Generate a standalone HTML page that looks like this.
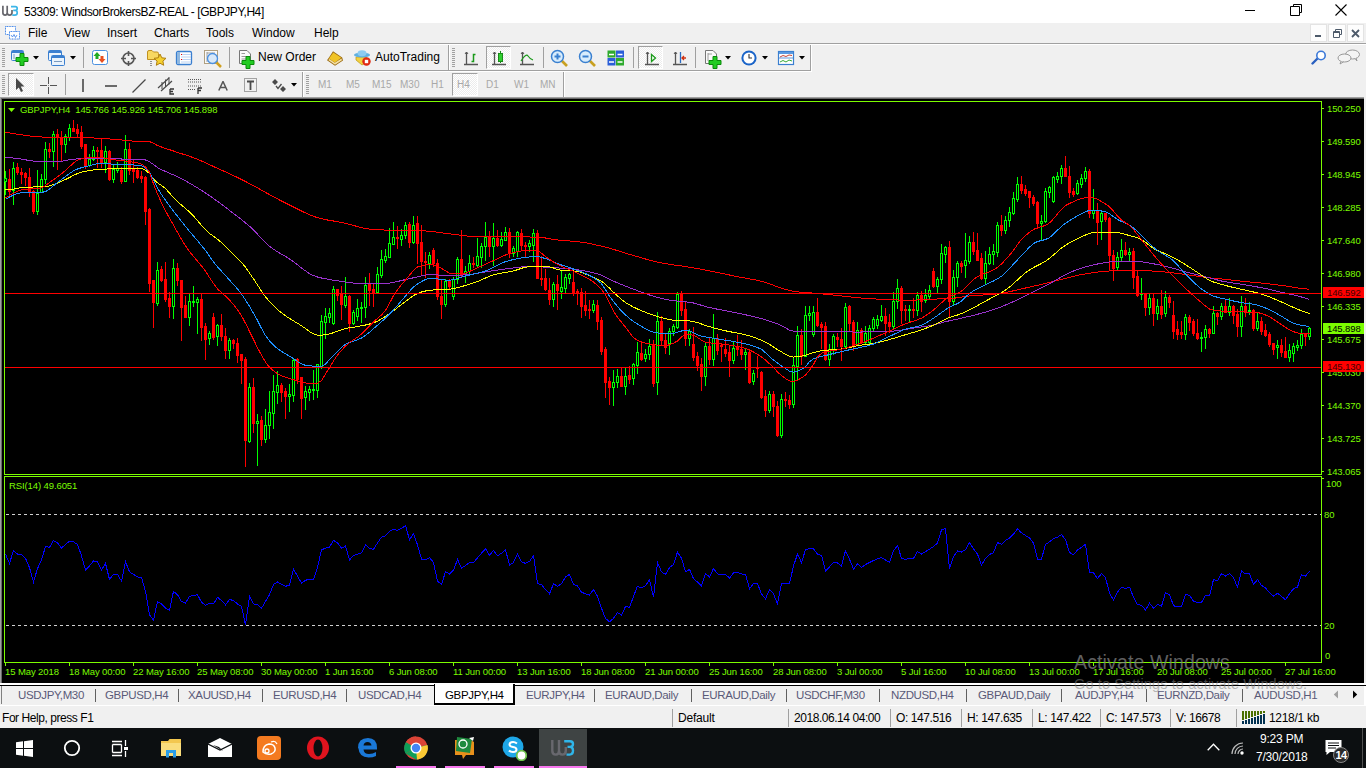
<!DOCTYPE html>
<html><head><meta charset="utf-8">
<style>
*{margin:0;padding:0;box-sizing:border-box}
html,body{width:1366px;height:768px;overflow:hidden;background:#f0f0f0;font-family:"Liberation Sans",sans-serif;}
.a{position:absolute}
.t{position:absolute;white-space:nowrap;font-size:12px;line-height:14px;color:#000}
svg{display:block}
</style></head><body>
<!-- title bar -->
<div class="a" style="left:0;top:0;width:1366px;height:23px;background:#fff"></div>
<svg class="a" style="left:0;top:0" width="20" height="20" viewBox="0 0 20 20">
<path d="M2.9 5.8 V12.8 Q2.9 15.1 5.1 15.1 Q7.2 15.1 7.2 12.8 V5.8 M7.2 12.8 Q7.2 15.1 9.6 15.1 Q12 15.1 12 12.8 V10" fill="none" stroke="#67676d" stroke-width="1.7"/>
<path d="M11 6.6 H15.3 Q17.2 6.6 17.2 8.5 Q17.2 10.4 15.1 10.4 H13.2 M15.1 10.4 Q17.2 10.4 17.2 12.7 Q17.2 15.1 14.8 15.1 H12.3" fill="none" stroke="#3db6e8" stroke-width="1.7"/>
</svg>
<div class="t" style="left:24px;top:5px;font-size:12px;letter-spacing:-0.42px">53309: WindsorBrokersBZ-REAL - [GBPJPY,H4]</div>
<div class="a" style="left:1245px;top:10px;width:10px;height:1px;background:#000"></div>
<svg class="a" style="left:1290px;top:4px" width="12" height="12" viewBox="0 0 12 12"><path d="M3.5 2.5 V0.5 H11.5 V8.5 H9.5 M0.5 2.5 H9.5 V11.5 H0.5 Z" fill="none" stroke="#000" stroke-width="1"/></svg>
<svg class="a" style="left:1335px;top:4px" width="12" height="12" viewBox="0 0 12 12"><path d="M0.5 0.5 L11.5 11.5 M11.5 0.5 L0.5 11.5" stroke="#000" stroke-width="1.1"/></svg>
<!-- menu bar -->
<div class="a" style="left:0;top:23px;width:1366px;height:20px;background:#f0f0f0"></div>
<svg class="a" style="left:4px;top:25px" width="17" height="15" viewBox="0 0 17 15">
<rect x="1.5" y="1.5" width="10" height="8" fill="#fff" stroke="#3c82e8" stroke-dasharray="1,0.6"/>
<rect x="5.5" y="6.5" width="10" height="7.5" fill="#fff" stroke="#3c82e8" stroke-dasharray="1,0.6"/>
<path d="M7 10 L8.5 12 L10 9.5 L11.5 12.5 L13 10" fill="none" stroke="#3c82e8" stroke-width="0.8"/>
</svg>
<div class="t" style="left:28px;top:26px">File</div>
<div class="t" style="left:64px;top:26px">View</div>
<div class="t" style="left:107px;top:26px">Insert</div>
<div class="t" style="left:154px;top:26px">Charts</div>
<div class="t" style="left:206px;top:26px">Tools</div>
<div class="t" style="left:252px;top:26px">Window</div>
<div class="t" style="left:314px;top:26px">Help</div>
<!-- mdi buttons -->
<div class="a" style="left:1310px;top:24px;width:17px;height:18px;background:#fdfdfd;border:1px solid #e3e3e3"></div>
<div class="a" style="left:1328px;top:24px;width:18px;height:18px;background:#fdfdfd;border:1px solid #e3e3e3"></div>
<div class="a" style="left:1347px;top:24px;width:17px;height:18px;background:#fdfdfd;border:1px solid #e3e3e3"></div>
<div class="a" style="left:1315px;top:35px;width:6px;height:2px;background:#4d5a6a"></div>
<svg class="a" style="left:1333px;top:29px" width="9" height="9" viewBox="0 0 9 9"><path d="M2.5 2.5 V0.5 H8.5 V5.5 H6.5 M0.5 2.5 H6.5 V8.5 H0.5 Z M0.5 3.5 H6.5" fill="none" stroke="#4d5a6a" stroke-width="1"/></svg>
<svg class="a" style="left:1351px;top:29px" width="9" height="9" viewBox="0 0 9 9"><path d="M1 1 L8 8 M8 1 L1 8" stroke="#4d5a6a" stroke-width="1.8"/></svg>
<div class="a" style="left:0;top:43px;width:1366px;height:1px;background:#a0a0a0"></div>
<div class="a" style="left:0;top:44px;width:1366px;height:1px;background:#fff"></div>
<!-- toolbar etched borders -->
<div class="a" style="left:0;top:70px;width:811px;height:1px;background:#a0a0a0"></div>
<div class="a" style="left:0;top:71px;width:812px;height:1px;background:#fff"></div>
<div class="a" style="left:448px;top:45px;width:1px;height:25px;background:#a0a0a0"></div>
<div class="a" style="left:449px;top:45px;width:1px;height:25px;background:#fff"></div>
<div class="a" style="left:810px;top:45px;width:1px;height:25px;background:#a0a0a0"></div>
<div class="a" style="left:811px;top:45px;width:1px;height:26px;background:#fff"></div>
<div class="a" style="left:302px;top:72px;width:1px;height:25px;background:#a0a0a0"></div>
<div class="a" style="left:303px;top:72px;width:1px;height:25px;background:#fff"></div>
<div class="a" style="left:563px;top:72px;width:1px;height:25px;background:#a0a0a0"></div>
<div class="a" style="left:564px;top:72px;width:1px;height:25px;background:#fff"></div>
<!-- grips -->
<svg class="a" style="left:2px;top:48px" width="3" height="19"><g fill="#a0a0a0"><rect y="0" width="3" height="1"/><rect y="2" width="3" height="1"/><rect y="4" width="3" height="1"/><rect y="6" width="3" height="1"/><rect y="8" width="3" height="1"/><rect y="10" width="3" height="1"/><rect y="12" width="3" height="1"/><rect y="14" width="3" height="1"/><rect y="16" width="3" height="1"/><rect y="18" width="3" height="1"/></g></svg>
<svg class="a" style="left:452px;top:48px" width="3" height="19"><g fill="#a0a0a0"><rect y="0" width="3" height="1"/><rect y="2" width="3" height="1"/><rect y="4" width="3" height="1"/><rect y="6" width="3" height="1"/><rect y="8" width="3" height="1"/><rect y="10" width="3" height="1"/><rect y="12" width="3" height="1"/><rect y="14" width="3" height="1"/><rect y="16" width="3" height="1"/><rect y="18" width="3" height="1"/></g></svg>
<svg class="a" style="left:2px;top:75px" width="3" height="19"><g fill="#a0a0a0"><rect y="0" width="3" height="1"/><rect y="2" width="3" height="1"/><rect y="4" width="3" height="1"/><rect y="6" width="3" height="1"/><rect y="8" width="3" height="1"/><rect y="10" width="3" height="1"/><rect y="12" width="3" height="1"/><rect y="14" width="3" height="1"/><rect y="16" width="3" height="1"/><rect y="18" width="3" height="1"/></g></svg>
<svg class="a" style="left:306px;top:75px" width="3" height="19"><g fill="#a0a0a0"><rect y="0" width="3" height="1"/><rect y="2" width="3" height="1"/><rect y="4" width="3" height="1"/><rect y="6" width="3" height="1"/><rect y="8" width="3" height="1"/><rect y="10" width="3" height="1"/><rect y="12" width="3" height="1"/><rect y="14" width="3" height="1"/><rect y="16" width="3" height="1"/><rect y="18" width="3" height="1"/></g></svg>
<!-- separators -->
<div class="a" style="left:83px;top:47px;width:1px;height:21px;background:#a0a0a0"></div>
<div class="a" style="left:229px;top:47px;width:1px;height:21px;background:#a0a0a0"></div>
<div class="a" style="left:543px;top:47px;width:1px;height:21px;background:#a0a0a0"></div>
<div class="a" style="left:633px;top:47px;width:1px;height:21px;background:#a0a0a0"></div>
<div class="a" style="left:695px;top:47px;width:1px;height:21px;background:#a0a0a0"></div>
<div class="a" style="left:65px;top:74px;width:1px;height:21px;background:#a0a0a0"></div>
<!-- pressed buttons -->
<div class="a" style="left:486px;top:46px;width:25px;height:23px;background:repeating-conic-gradient(#ffffff 0 25%,#ececec 0 50%) 0 0/2px 2px;border-left:1px solid #a0a0a0;border-top:1px solid #a0a0a0;border-right:1px solid #fff;border-bottom:1px solid #fff"></div>
<div class="a" style="left:638px;top:46px;width:25px;height:23px;background:repeating-conic-gradient(#ffffff 0 25%,#ececec 0 50%) 0 0/2px 2px;border-left:1px solid #a0a0a0;border-top:1px solid #a0a0a0;border-right:1px solid #fff;border-bottom:1px solid #fff"></div>
<div class="a" style="left:8px;top:73px;width:26px;height:23px;background:repeating-conic-gradient(#ffffff 0 25%,#ececec 0 50%) 0 0/2px 2px;border-left:1px solid #a0a0a0;border-top:1px solid #a0a0a0;border-right:1px solid #fff;border-bottom:1px solid #fff"></div>
<div class="a" style="left:452px;top:73px;width:26px;height:23px;background:repeating-conic-gradient(#ffffff 0 25%,#ececec 0 50%) 0 0/2px 2px;border-left:1px solid #a0a0a0;border-top:1px solid #a0a0a0;border-right:1px solid #fff;border-bottom:1px solid #fff"></div>
<!-- dropdown arrows -->
<svg class="a" style="left:33px;top:56px" width="6" height="4"><path d="M0 0H6L3 3.5Z" fill="#000"/></svg>
<svg class="a" style="left:70px;top:56px" width="6" height="4"><path d="M0 0H6L3 3.5Z" fill="#000"/></svg>
<svg class="a" style="left:725px;top:56px" width="6" height="4"><path d="M0 0H6L3 3.5Z" fill="#000"/></svg>
<svg class="a" style="left:762px;top:56px" width="6" height="4"><path d="M0 0H6L3 3.5Z" fill="#000"/></svg>
<svg class="a" style="left:799px;top:56px" width="6" height="4"><path d="M0 0H6L3 3.5Z" fill="#000"/></svg>
<svg class="a" style="left:291px;top:83px" width="6" height="4"><path d="M0 0H6L3 3.5Z" fill="#000"/></svg>
<!-- icon: new chart -->
<svg class="a" style="left:10px;top:49px" width="20" height="17" viewBox="0 0 20 17">
<rect x="1.5" y="1.5" width="12" height="10" rx="1" fill="#eaf3fc" stroke="#3a7fd0"/><rect x="2" y="2" width="11" height="2" fill="#3a7fd0"/>
<path d="M4 5 V10" stroke="#7a9ac0"/>
<path d="M10 4.5 H14 V8.5 H18 V12.5 H14 V16.5 H10 V12.5 H6 V8.5 H10 Z" fill="#22cc22" stroke="#0a8a0a"/>
</svg>
<!-- icon: profiles -->
<svg class="a" style="left:47px;top:49px" width="20" height="18" viewBox="0 0 20 18">
<rect x="1.5" y="1.5" width="13" height="10" rx="1" fill="#eaf3fc" stroke="#3a7fd0"/><rect x="2" y="2" width="12" height="2" fill="#3a7fd0"/>
<rect x="4.5" y="6.5" width="13" height="10" rx="1" fill="#eaf3fc" stroke="#3a7fd0"/><rect x="5" y="7" width="12" height="2" fill="#3a7fd0"/>
<path d="M7 12.5 H15" stroke="#7a9ac0"/>
</svg>
<!-- icon: market watch -->
<svg class="a" style="left:91px;top:49px" width="18" height="17" viewBox="0 0 18 17">
<rect x="1.5" y="1.5" width="15" height="14" rx="2" fill="#fff" stroke="#4a90e0"/>
<path d="M6 3 L9.5 7 H7.5 V10 H4.5 V7 H2.5 Z" fill="#22aa22"/>
<path d="M11 14 L14.5 10 H12.5 V7 H9.5 V10 H7.5 Z" fill="#e85020"/>
</svg>
<!-- icon: crosshair -->
<svg class="a" style="left:120px;top:50px" width="17" height="17" viewBox="0 0 17 17">
<circle cx="8.5" cy="8.5" r="5.5" fill="none" stroke="#555" stroke-width="1.6"/>
<path d="M8.5 1 V6 M8.5 11 V16 M1 8.5 H6 M11 8.5 H16" stroke="#555" stroke-width="1.6"/>
</svg>
<!-- icon: folder star -->
<svg class="a" style="left:146px;top:49px" width="21" height="18" viewBox="0 0 21 18">
<path d="M1.5 3 Q1.5 1.5 3 1.5 H6 L7.5 3 H11 Q12.5 3 12.5 4.5 V10.5 H1.5 Z" fill="#f8d860" stroke="#c09020"/>
<path d="M5 12 V17" stroke="#333" stroke-dasharray="1,1"/>
<path d="M14 5 L15.8 8.8 L20 9.3 L16.9 12.1 L17.7 16.3 L14 14.2 L10.3 16.3 L11.1 12.1 L8 9.3 L12.2 8.8 Z" fill="#f5d030" stroke="#b08010"/>
</svg>
<!-- icon: navigator -->
<svg class="a" style="left:175px;top:50px" width="18" height="16" viewBox="0 0 18 16">
<rect x="1.5" y="1.5" width="15" height="13" rx="1.5" fill="#fff" stroke="#3a7fd0" stroke-width="1.3"/>
<rect x="2" y="2" width="3" height="12" fill="#90b8e0"/>
<path d="M6 4.5H16M6 7H16M6 9.5H16M6 12H16" stroke="#a8c8f0" stroke-width="0.8"/>
<rect x="6" y="4" width="1" height="1" fill="#e00"/><rect x="6" y="9" width="1" height="1" fill="#e00"/>
</svg>
<!-- icon: tester -->
<svg class="a" style="left:203px;top:49px" width="20" height="19" viewBox="0 0 20 19">
<rect x="1.5" y="1.5" width="13" height="13" fill="#fafafa" stroke="#b0a080"/>
<path d="M4 3 V13 M4 4 H12" stroke="#888" stroke-width="0.8"/>
<path d="M13 13 L18 18" stroke="#d0a020" stroke-width="2.5"/>
<circle cx="9.5" cy="9.5" r="5" fill="#cfe4f8" fill-opacity="0.8" stroke="#4a90e0" stroke-width="1.3"/>
</svg>
<!-- icon: new order -->
<svg class="a" style="left:238px;top:49px" width="18" height="20" viewBox="0 0 18 20">
<path d="M1.5 1.5 H9 L12.5 5 V14.5 H1.5 Z" fill="#fafafa" stroke="#777"/>
<path d="M3.5 4.5 H7 M3.5 7.5 H9 M3.5 10 H9" stroke="#999"/>
<path d="M8 7.5 H12 V11.5 H16 V15.5 H12 V19.5 H8 V15.5 H4 V11.5 H8 Z" fill="#22cc22" stroke="#0a8a0a"/>
</svg>
<div class="t" style="left:258px;top:50px">New Order</div>
<!-- icon: book -->
<svg class="a" style="left:326px;top:50px" width="18" height="17" viewBox="0 0 18 17">
<path d="M7 1.2 L16.2 7.4 L17 10.6 L9 15.8 L1 10.2 L3 7.5 Z" fill="#9a6a12"/>
<path d="M7.3 2.5 L15.3 7.8 L8.8 12.6 L3 8.6 Z" fill="#f0c428"/>
<path d="M2.2 10 L3.4 9 L8.8 12.8 L15.5 8.6 L16 10.3 L9 14.7 Z" fill="#f6e0a0"/>
</svg>
<!-- icon: autotrading -->
<svg class="a" style="left:353px;top:49px" width="19" height="18" viewBox="0 0 19 18">
<path d="M3 8 L13 8 L15 12 L9 16 L3 11 Z" fill="#f2d040" stroke="#c0a020" stroke-width="0.8"/>
<ellipse cx="9" cy="6" rx="8" ry="2.6" fill="#60b0e0"/>
<ellipse cx="9" cy="4.2" rx="4.5" ry="3" fill="#8ccbf0"/>
<circle cx="13.5" cy="12.5" r="4.2" fill="#e02810"/>
<rect x="11.8" y="10.8" width="3.4" height="3.4" fill="#fff"/>
</svg>
<div class="t" style="left:375px;top:50px">AutoTrading</div>
<!-- chart toolbar icons -->
<svg class="a" style="left:463px;top:51px" width="16" height="15" viewBox="0 0 16 15">
<path d="M3.5 1 V14 M1 13.5 H15" stroke="#555" stroke-width="1.3"/><path d="M2 3 L3.5 1 L5 3" fill="none" stroke="#555"/>
<path d="M8.5 10.5 H10.5 V3.5 H12.5" fill="none" stroke="#1a9a1a" stroke-width="1.5"/>
</svg>
<svg class="a" style="left:491px;top:51px" width="16" height="15" viewBox="0 0 16 15">
<path d="M3.5 1 V14 M1 13.5 H15" stroke="#555" stroke-width="1.3"/><path d="M2 3 L3.5 1 L5 3" fill="none" stroke="#555"/>
<path d="M9.5 0 V12" stroke="#1a8a1a"/><rect x="7.5" y="2.5" width="4" height="8" fill="#30d030" stroke="#1a8a1a"/>
</svg>
<svg class="a" style="left:519px;top:51px" width="16" height="15" viewBox="0 0 16 15">
<path d="M3.5 1 V14 M1 13.5 H15" stroke="#555" stroke-width="1.3"/><path d="M2 3 L3.5 1 L5 3" fill="none" stroke="#555"/>
<path d="M2 10 Q7 2 9 5 Q11 8 14 9" fill="none" stroke="#1a9a1a" stroke-width="1.2"/>
</svg>
<svg class="a" style="left:550px;top:49px" width="20" height="18" viewBox="0 0 20 18">
<path d="M11 11 L17 17" stroke="#c8a020" stroke-width="2.6"/>
<circle cx="7.5" cy="7.5" r="6" fill="#d8ecfc" stroke="#3a80d0" stroke-width="1.5"/>
<path d="M4.5 7.5 H10.5 M7.5 4.5 V10.5" stroke="#3a80d0" stroke-width="2"/>
</svg>
<svg class="a" style="left:578px;top:49px" width="20" height="18" viewBox="0 0 20 18">
<path d="M11 11 L17 17" stroke="#c8a020" stroke-width="2.6"/>
<circle cx="7.5" cy="7.5" r="6" fill="#d8ecfc" stroke="#3a80d0" stroke-width="1.5"/>
<path d="M4.5 7.5 H10.5" stroke="#3a80d0" stroke-width="2"/>
</svg>
<svg class="a" style="left:607px;top:50px" width="18" height="16" viewBox="0 0 18 16">
<rect x="0.5" y="0.5" width="8" height="7" fill="#2eaa2e"/><rect x="9" y="0.5" width="8" height="7" fill="#2a5ed8"/>
<rect x="0.5" y="8" width="8" height="7.5" fill="#2a5ed8"/><rect x="9" y="8" width="8" height="7.5" fill="#2eaa2e"/>
<path d="M2 4.5H7M10.5 4.5H15.5M2 12H7M10.5 12H15.5" stroke="#fff" stroke-width="1.5"/>
</svg>
<svg class="a" style="left:644px;top:51px" width="16" height="15" viewBox="0 0 16 15">
<path d="M3.5 1 V14 M1 13.5 H15" stroke="#555" stroke-width="1.3"/><path d="M2 3 L3.5 1 L5 3" fill="none" stroke="#555"/>
<path d="M7.5 3.5 L11.5 7 L7.5 10.5 Z" fill="#fff" stroke="#1a9a1a" stroke-width="1.3"/>
</svg>
<svg class="a" style="left:672px;top:51px" width="16" height="15" viewBox="0 0 16 15">
<path d="M3.5 1 V14 M1 13.5 H15" stroke="#555" stroke-width="1.3"/><path d="M2 3 L3.5 1 L5 3" fill="none" stroke="#555"/>
<path d="M8.5 1 V12" stroke="#2a6ac0" stroke-width="1.3"/><path d="M14 7 H10 M12 5 L10 7 L12 9" fill="none" stroke="#d03010" stroke-width="1.3"/>
</svg>
<svg class="a" style="left:704px;top:49px" width="19" height="20" viewBox="0 0 19 20">
<path d="M1.5 1.5 H9 L12.5 5 V14.5 H1.5 Z" fill="#fafafa" stroke="#777"/>
<path d="M4 4 V12 M4 5 H8" stroke="#888" stroke-width="0.8"/>
<path d="M9 7.5 H13 V11.5 H17 V15.5 H13 V19.5 H9 V15.5 H5 V11.5 H9 Z" fill="#22cc22" stroke="#0a8a0a"/>
</svg>
<svg class="a" style="left:740px;top:49px" width="18" height="18" viewBox="0 0 18 18">
<circle cx="9" cy="9" r="7.6" fill="#1a64c8"/><circle cx="9" cy="9" r="5.6" fill="#fff"/>
<path d="M9 5 V9 H12" fill="none" stroke="#333" stroke-width="1.1"/>
</svg>
<svg class="a" style="left:777px;top:50px" width="18" height="16" viewBox="0 0 18 16">
<rect x="1.5" y="1.5" width="15" height="13" fill="#fff" stroke="#3a7fd0" stroke-width="1.2"/>
<rect x="2" y="2" width="14" height="2" fill="#5a9ae0"/>
<path d="M2 8 H16" stroke="#3a7fd0" stroke-width="0.8"/>
<path d="M3 7 L6 5.5 L9 6.5 L12 5 L15 5.5" fill="none" stroke="#c03020" stroke-width="0.9"/>
<path d="M3 12 L6 10.5 L9 12 L12 10 L15 11" fill="none" stroke="#20a020" stroke-width="0.9"/>
</svg>
<!-- row 2: line studies -->
<svg class="a" style="left:15px;top:77px" width="10" height="16" viewBox="0 0 10 16">
<path d="M1 1 V13 L3.8 10.5 L6 15 L8 14 L5.8 9.6 L9.5 9.4 Z" fill="#484848"/>
</svg>
<svg class="a" style="left:40px;top:77px" width="17" height="17" viewBox="0 0 17 17">
<path d="M8.5 0 V7 M8.5 10 V17 M0 8.5 H7 M10 8.5 H17" stroke="#555" stroke-width="1"/><rect x="8" y="8" width="1" height="1" fill="#888"/>
</svg>
<div class="a" style="left:82px;top:79px;width:2px;height:13px;background:#6a6a6a"></div>
<div class="a" style="left:105px;top:85px;width:12px;height:2px;background:#6a6a6a"></div>
<svg class="a" style="left:132px;top:79px" width="14" height="14" viewBox="0 0 14 14"><path d="M0.5 13.5 L13.5 0.5" stroke="#4a4a4a" stroke-width="1.3"/></svg>
<svg class="a" style="left:157px;top:76px" width="18" height="19" viewBox="0 0 18 19">
<path d="M1 12 L12 2 M4 15 L15 5" stroke="#4a4a4a" stroke-width="1.2"/>
<path d="M5 6 V13 M8.5 3.5 V11 M12 1 V8.5" stroke="#4a4a4a" stroke-width="1"/>
<path d="M13 13 H17 M13 13 V18 H17 M13 15.5 H16" fill="none" stroke="#333" stroke-width="1.3"/>
</svg>
<svg class="a" style="left:187px;top:78px" width="16" height="17" viewBox="0 0 16 17">
<path d="M1 1.5 H14 M1 4 H14 M1 8 H14 M1 11.5 H9" stroke="#555" stroke-dasharray="1,1"/>
<path d="M11 10 H15 M11 10 V16 M11 12.5 H14" fill="none" stroke="#333" stroke-width="1.3"/>
</svg>
<svg class="a" style="left:218px;top:81px" width="10" height="10" viewBox="0 0 10 10"><path d="M0.8 9.5 L5 0.5 L9.2 9.5 M2.5 6.5 H7.5" fill="none" stroke="#555" stroke-width="1.5"/></svg>
<svg class="a" style="left:243px;top:77px" width="15" height="16" viewBox="0 0 15 16">
<rect x="1.5" y="1.5" width="12" height="13" fill="none" stroke="#555" stroke-dasharray="1,1"/>
<path d="M4 4.5 H11 M7.5 4.5 V13" stroke="#4a4a4a" stroke-width="1.8"/>
</svg>
<svg class="a" style="left:271px;top:78px" width="16" height="15" viewBox="0 0 16 15">
<path d="M1 4 L4 1 L7 4 L4 7 Z M9 11 L12 8 L15 11 L12 14 Z" fill="#4a4a4a"/>
<path d="M5 8 L7 10.5 L10.5 6" fill="none" stroke="#4a4a4a" stroke-width="1.3"/>
</svg>
<!-- periodicity -->
<div class="t" style="left:318px;top:78px;font-size:10px;color:#a8a8a8">M1</div>
<div class="t" style="left:346px;top:78px;font-size:10px;color:#a8a8a8">M5</div>
<div class="t" style="left:372px;top:78px;font-size:10px;color:#a8a8a8">M15</div>
<div class="t" style="left:400px;top:78px;font-size:10px;color:#a8a8a8">M30</div>
<div class="t" style="left:431px;top:78px;font-size:10px;color:#a8a8a8">H1</div>
<div class="t" style="left:457px;top:78px;font-size:10px;color:#a8a8a8">H4</div>
<div class="t" style="left:486px;top:78px;font-size:10px;color:#a8a8a8">D1</div>
<div class="t" style="left:514px;top:78px;font-size:10px;color:#a8a8a8">W1</div>
<div class="t" style="left:540px;top:78px;font-size:10px;color:#a8a8a8">MN</div>
<!-- right side icons -->
<svg class="a" style="left:1311px;top:50px" width="16" height="15" viewBox="0 0 16 15">
<path d="M6 9 L1.5 13.5" stroke="#2a60c0" stroke-width="2.4" stroke-linecap="round"/>
<circle cx="10" cy="5.5" r="4.2" fill="#fff" stroke="#3a78d8" stroke-width="1.6"/>
</svg>
<svg class="a" style="left:1337px;top:49px" width="24" height="16" viewBox="0 0 24 16">
<ellipse cx="15.5" cy="5.5" rx="7" ry="4.5" fill="#f4f4f4" stroke="#999"/>
<path d="M18 9.5 L20 12 L19 9" fill="#f4f4f4" stroke="#999"/>
<ellipse cx="7.5" cy="9" rx="6.5" ry="4" fill="#f4f4f4" stroke="#999"/>
<path d="M4 12.5 L3 15 L6.5 12.8" fill="#f4f4f4" stroke="#999"/>
</svg>

<svg id="chart" width="1366" height="586" viewBox="0 97 1366 586" shape-rendering="crispEdges" style="position:absolute;left:0;top:97px">
<rect x="0" y="97" width="1366" height="586" fill="#f0f0f0"/>
<rect x="0" y="97" width="1364" height="1" fill="#a0a0a0"/>
<rect x="0" y="97" width="1" height="586" fill="#a0a0a0"/>
<rect x="1" y="98" width="1363" height="1" fill="#696969"/>
<rect x="1" y="98" width="1" height="585" fill="#696969"/>
<rect x="2" y="99" width="1362" height="584" fill="#000"/>
<rect x="4.5" y="101.5" width="1317" height="373" fill="none" stroke="#7cfc00" stroke-width="1"/>
<rect x="4.5" y="476.5" width="1317" height="186" fill="none" stroke="#7cfc00" stroke-width="1"/>
<g><rect x="5" y="171" width="1" height="7" fill="#00ff00"/>
<rect x="5" y="182" width="1" height="13" fill="#00ff00"/>
<rect x="4" y="178" width="3" height="4" fill="#00ff00"/>
<rect x="5" y="179" width="1" height="2" fill="#000"/>
<rect x="9" y="169" width="1" height="10" fill="#ff0000"/>
<rect x="9" y="192" width="1" height="3" fill="#ff0000"/>
<rect x="8" y="179" width="3" height="13" fill="#ff0000"/>
<rect x="13" y="162" width="1" height="6" fill="#00ff00"/>
<rect x="13" y="191" width="1" height="14" fill="#00ff00"/>
<rect x="12" y="168" width="3" height="23" fill="#00ff00"/>
<rect x="13" y="169" width="1" height="21" fill="#000"/>
<rect x="17" y="163" width="1" height="4" fill="#ff0000"/>
<rect x="17" y="173" width="1" height="2" fill="#ff0000"/>
<rect x="16" y="167" width="3" height="6" fill="#ff0000"/>
<rect x="21" y="168" width="1" height="4" fill="#ff0000"/>
<rect x="21" y="175" width="1" height="9" fill="#ff0000"/>
<rect x="20" y="172" width="3" height="3" fill="#ff0000"/>
<rect x="25" y="172" width="1" height="1" fill="#ff0000"/>
<rect x="25" y="178" width="1" height="8" fill="#ff0000"/>
<rect x="24" y="173" width="3" height="5" fill="#ff0000"/>
<rect x="29" y="168" width="1" height="9" fill="#ff0000"/>
<rect x="29" y="192" width="1" height="5" fill="#ff0000"/>
<rect x="28" y="177" width="3" height="15" fill="#ff0000"/>
<rect x="33" y="190" width="1" height="1" fill="#ff0000"/>
<rect x="33" y="212" width="1" height="2" fill="#ff0000"/>
<rect x="32" y="191" width="3" height="21" fill="#ff0000"/>
<rect x="37" y="170" width="1" height="23" fill="#00ff00"/>
<rect x="37" y="212" width="1" height="3" fill="#00ff00"/>
<rect x="36" y="193" width="3" height="19" fill="#00ff00"/>
<rect x="37" y="194" width="1" height="17" fill="#000"/>
<rect x="41" y="174" width="1" height="5" fill="#00ff00"/>
<rect x="40" y="179" width="3" height="14" fill="#00ff00"/>
<rect x="41" y="180" width="1" height="12" fill="#000"/>
<rect x="45" y="142" width="1" height="7" fill="#00ff00"/>
<rect x="45" y="180" width="1" height="4" fill="#00ff00"/>
<rect x="44" y="149" width="3" height="31" fill="#00ff00"/>
<rect x="45" y="150" width="1" height="29" fill="#000"/>
<rect x="49" y="143" width="1" height="6" fill="#ff0000"/>
<rect x="49" y="152" width="1" height="6" fill="#ff0000"/>
<rect x="48" y="149" width="3" height="3" fill="#ff0000"/>
<rect x="53" y="131" width="1" height="3" fill="#00ff00"/>
<rect x="53" y="152" width="1" height="15" fill="#00ff00"/>
<rect x="52" y="134" width="3" height="18" fill="#00ff00"/>
<rect x="53" y="135" width="1" height="16" fill="#000"/>
<rect x="57" y="129" width="1" height="5" fill="#ff0000"/>
<rect x="57" y="138" width="1" height="32" fill="#ff0000"/>
<rect x="56" y="134" width="3" height="4" fill="#ff0000"/>
<rect x="61" y="131" width="1" height="7" fill="#ff0000"/>
<rect x="61" y="145" width="1" height="16" fill="#ff0000"/>
<rect x="60" y="138" width="3" height="7" fill="#ff0000"/>
<rect x="65" y="134" width="1" height="2" fill="#00ff00"/>
<rect x="65" y="145" width="1" height="8" fill="#00ff00"/>
<rect x="64" y="136" width="3" height="9" fill="#00ff00"/>
<rect x="65" y="137" width="1" height="7" fill="#000"/>
<rect x="69" y="124" width="1" height="4" fill="#00ff00"/>
<rect x="69" y="138" width="1" height="3" fill="#00ff00"/>
<rect x="68" y="128" width="3" height="10" fill="#00ff00"/>
<rect x="69" y="129" width="1" height="8" fill="#000"/>
<rect x="73" y="120" width="1" height="8" fill="#ff0000"/>
<rect x="72" y="128" width="3" height="4" fill="#ff0000"/>
<rect x="77" y="124" width="1" height="5" fill="#ff0000"/>
<rect x="77" y="134" width="1" height="4" fill="#ff0000"/>
<rect x="76" y="129" width="3" height="5" fill="#ff0000"/>
<rect x="81" y="126" width="1" height="6" fill="#ff0000"/>
<rect x="81" y="147" width="1" height="2" fill="#ff0000"/>
<rect x="80" y="132" width="3" height="15" fill="#ff0000"/>
<rect x="85" y="167" width="1" height="2" fill="#ff0000"/>
<rect x="84" y="144" width="3" height="23" fill="#ff0000"/>
<rect x="89" y="154" width="1" height="5" fill="#00ff00"/>
<rect x="89" y="166" width="1" height="1" fill="#00ff00"/>
<rect x="88" y="159" width="3" height="7" fill="#00ff00"/>
<rect x="89" y="160" width="1" height="5" fill="#000"/>
<rect x="93" y="146" width="1" height="4" fill="#00ff00"/>
<rect x="93" y="160" width="1" height="1" fill="#00ff00"/>
<rect x="92" y="150" width="3" height="10" fill="#00ff00"/>
<rect x="93" y="151" width="1" height="8" fill="#000"/>
<rect x="97" y="147" width="1" height="3" fill="#ff0000"/>
<rect x="97" y="152" width="1" height="16" fill="#ff0000"/>
<rect x="96" y="150" width="3" height="2" fill="#ff0000"/>
<rect x="101" y="139" width="1" height="11" fill="#ff0000"/>
<rect x="101" y="164" width="1" height="4" fill="#ff0000"/>
<rect x="100" y="150" width="3" height="14" fill="#ff0000"/>
<rect x="105" y="146" width="1" height="5" fill="#00ff00"/>
<rect x="105" y="163" width="1" height="10" fill="#00ff00"/>
<rect x="104" y="151" width="3" height="12" fill="#00ff00"/>
<rect x="105" y="152" width="1" height="10" fill="#000"/>
<rect x="109" y="150" width="1" height="1" fill="#ff0000"/>
<rect x="109" y="180" width="1" height="1" fill="#ff0000"/>
<rect x="108" y="151" width="3" height="29" fill="#ff0000"/>
<rect x="113" y="165" width="1" height="4" fill="#00ff00"/>
<rect x="113" y="180" width="1" height="3" fill="#00ff00"/>
<rect x="112" y="169" width="3" height="11" fill="#00ff00"/>
<rect x="113" y="170" width="1" height="9" fill="#000"/>
<rect x="117" y="162" width="1" height="6" fill="#00ff00"/>
<rect x="117" y="171" width="1" height="2" fill="#00ff00"/>
<rect x="116" y="168" width="3" height="3" fill="#00ff00"/>
<rect x="117" y="169" width="1" height="1" fill="#000"/>
<rect x="121" y="167" width="1" height="3" fill="#ff0000"/>
<rect x="121" y="182" width="1" height="2" fill="#ff0000"/>
<rect x="120" y="170" width="3" height="12" fill="#ff0000"/>
<rect x="125" y="135" width="1" height="14" fill="#00ff00"/>
<rect x="124" y="149" width="3" height="33" fill="#00ff00"/>
<rect x="125" y="150" width="1" height="31" fill="#000"/>
<rect x="129" y="143" width="1" height="6" fill="#ff0000"/>
<rect x="129" y="171" width="1" height="4" fill="#ff0000"/>
<rect x="128" y="149" width="3" height="22" fill="#ff0000"/>
<rect x="133" y="159" width="1" height="9" fill="#ff0000"/>
<rect x="133" y="172" width="1" height="11" fill="#ff0000"/>
<rect x="132" y="168" width="3" height="4" fill="#ff0000"/>
<rect x="137" y="167" width="1" height="3" fill="#ff0000"/>
<rect x="137" y="178" width="1" height="1" fill="#ff0000"/>
<rect x="136" y="170" width="3" height="8" fill="#ff0000"/>
<rect x="141" y="171" width="1" height="5" fill="#ff0000"/>
<rect x="141" y="179" width="1" height="4" fill="#ff0000"/>
<rect x="140" y="176" width="3" height="3" fill="#ff0000"/>
<rect x="145" y="176" width="1" height="1" fill="#ff0000"/>
<rect x="145" y="212" width="1" height="13" fill="#ff0000"/>
<rect x="144" y="177" width="3" height="35" fill="#ff0000"/>
<rect x="149" y="208" width="1" height="1" fill="#ff0000"/>
<rect x="149" y="284" width="1" height="8" fill="#ff0000"/>
<rect x="148" y="209" width="3" height="75" fill="#ff0000"/>
<rect x="153" y="303" width="1" height="25" fill="#ff0000"/>
<rect x="152" y="280" width="3" height="23" fill="#ff0000"/>
<rect x="157" y="262" width="1" height="8" fill="#00ff00"/>
<rect x="157" y="304" width="1" height="2" fill="#00ff00"/>
<rect x="156" y="270" width="3" height="34" fill="#00ff00"/>
<rect x="157" y="271" width="1" height="32" fill="#000"/>
<rect x="161" y="266" width="1" height="3" fill="#ff0000"/>
<rect x="161" y="281" width="1" height="1" fill="#ff0000"/>
<rect x="160" y="269" width="3" height="12" fill="#ff0000"/>
<rect x="165" y="262" width="1" height="17" fill="#ff0000"/>
<rect x="165" y="300" width="1" height="2" fill="#ff0000"/>
<rect x="164" y="279" width="3" height="21" fill="#ff0000"/>
<rect x="169" y="292" width="1" height="6" fill="#ff0000"/>
<rect x="169" y="307" width="1" height="11" fill="#ff0000"/>
<rect x="168" y="298" width="3" height="9" fill="#ff0000"/>
<rect x="173" y="259" width="1" height="9" fill="#00ff00"/>
<rect x="173" y="307" width="1" height="12" fill="#00ff00"/>
<rect x="172" y="268" width="3" height="39" fill="#00ff00"/>
<rect x="173" y="269" width="1" height="37" fill="#000"/>
<rect x="177" y="263" width="1" height="5" fill="#ff0000"/>
<rect x="177" y="281" width="1" height="5" fill="#ff0000"/>
<rect x="176" y="268" width="3" height="13" fill="#ff0000"/>
<rect x="181" y="308" width="1" height="33" fill="#ff0000"/>
<rect x="180" y="280" width="3" height="28" fill="#ff0000"/>
<rect x="185" y="296" width="1" height="9" fill="#ff0000"/>
<rect x="184" y="305" width="3" height="13" fill="#ff0000"/>
<rect x="189" y="294" width="1" height="7" fill="#00ff00"/>
<rect x="189" y="318" width="1" height="8" fill="#00ff00"/>
<rect x="188" y="301" width="3" height="17" fill="#00ff00"/>
<rect x="189" y="302" width="1" height="15" fill="#000"/>
<rect x="193" y="286" width="1" height="15" fill="#00ff00"/>
<rect x="193" y="303" width="1" height="4" fill="#00ff00"/>
<rect x="192" y="301" width="3" height="2" fill="#00ff00"/>
<rect x="197" y="297" width="1" height="2" fill="#00ff00"/>
<rect x="197" y="303" width="1" height="31" fill="#00ff00"/>
<rect x="196" y="299" width="3" height="4" fill="#00ff00"/>
<rect x="197" y="300" width="1" height="2" fill="#000"/>
<rect x="201" y="294" width="1" height="5" fill="#ff0000"/>
<rect x="201" y="328" width="1" height="13" fill="#ff0000"/>
<rect x="200" y="299" width="3" height="29" fill="#ff0000"/>
<rect x="205" y="323" width="1" height="3" fill="#ff0000"/>
<rect x="205" y="340" width="1" height="20" fill="#ff0000"/>
<rect x="204" y="326" width="3" height="14" fill="#ff0000"/>
<rect x="209" y="331" width="1" height="2" fill="#00ff00"/>
<rect x="209" y="339" width="1" height="6" fill="#00ff00"/>
<rect x="208" y="333" width="3" height="6" fill="#00ff00"/>
<rect x="209" y="334" width="1" height="4" fill="#000"/>
<rect x="213" y="313" width="1" height="4" fill="#ff0000"/>
<rect x="213" y="338" width="1" height="2" fill="#ff0000"/>
<rect x="212" y="317" width="3" height="21" fill="#ff0000"/>
<rect x="217" y="324" width="1" height="1" fill="#00ff00"/>
<rect x="217" y="337" width="1" height="9" fill="#00ff00"/>
<rect x="216" y="325" width="3" height="12" fill="#00ff00"/>
<rect x="217" y="326" width="1" height="10" fill="#000"/>
<rect x="221" y="314" width="1" height="11" fill="#ff0000"/>
<rect x="221" y="337" width="1" height="4" fill="#ff0000"/>
<rect x="220" y="325" width="3" height="12" fill="#ff0000"/>
<rect x="225" y="328" width="1" height="8" fill="#ff0000"/>
<rect x="225" y="351" width="1" height="8" fill="#ff0000"/>
<rect x="224" y="336" width="3" height="15" fill="#ff0000"/>
<rect x="229" y="338" width="1" height="2" fill="#00ff00"/>
<rect x="229" y="351" width="1" height="8" fill="#00ff00"/>
<rect x="228" y="340" width="3" height="11" fill="#00ff00"/>
<rect x="229" y="341" width="1" height="9" fill="#000"/>
<rect x="233" y="339" width="1" height="1" fill="#ff0000"/>
<rect x="233" y="344" width="1" height="5" fill="#ff0000"/>
<rect x="232" y="340" width="3" height="4" fill="#ff0000"/>
<rect x="237" y="338" width="1" height="5" fill="#ff0000"/>
<rect x="237" y="356" width="1" height="7" fill="#ff0000"/>
<rect x="236" y="343" width="3" height="13" fill="#ff0000"/>
<rect x="241" y="361" width="1" height="23" fill="#ff0000"/>
<rect x="240" y="354" width="3" height="7" fill="#ff0000"/>
<rect x="245" y="357" width="1" height="2" fill="#ff0000"/>
<rect x="245" y="441" width="1" height="26" fill="#ff0000"/>
<rect x="244" y="359" width="3" height="82" fill="#ff0000"/>
<rect x="249" y="383" width="1" height="4" fill="#00ff00"/>
<rect x="249" y="442" width="1" height="1" fill="#00ff00"/>
<rect x="248" y="387" width="3" height="55" fill="#00ff00"/>
<rect x="249" y="388" width="1" height="53" fill="#000"/>
<rect x="253" y="378" width="1" height="9" fill="#ff0000"/>
<rect x="253" y="424" width="1" height="9" fill="#ff0000"/>
<rect x="252" y="387" width="3" height="37" fill="#ff0000"/>
<rect x="257" y="414" width="1" height="7" fill="#00ff00"/>
<rect x="257" y="424" width="1" height="42" fill="#00ff00"/>
<rect x="256" y="421" width="3" height="3" fill="#00ff00"/>
<rect x="257" y="422" width="1" height="1" fill="#000"/>
<rect x="261" y="416" width="1" height="4" fill="#ff0000"/>
<rect x="261" y="440" width="1" height="6" fill="#ff0000"/>
<rect x="260" y="420" width="3" height="20" fill="#ff0000"/>
<rect x="265" y="409" width="1" height="16" fill="#00ff00"/>
<rect x="265" y="440" width="1" height="3" fill="#00ff00"/>
<rect x="264" y="425" width="3" height="15" fill="#00ff00"/>
<rect x="265" y="426" width="1" height="13" fill="#000"/>
<rect x="269" y="391" width="1" height="21" fill="#00ff00"/>
<rect x="269" y="426" width="1" height="13" fill="#00ff00"/>
<rect x="268" y="412" width="3" height="14" fill="#00ff00"/>
<rect x="269" y="413" width="1" height="12" fill="#000"/>
<rect x="273" y="375" width="1" height="16" fill="#00ff00"/>
<rect x="273" y="414" width="1" height="15" fill="#00ff00"/>
<rect x="272" y="391" width="3" height="23" fill="#00ff00"/>
<rect x="273" y="392" width="1" height="21" fill="#000"/>
<rect x="277" y="371" width="1" height="14" fill="#00ff00"/>
<rect x="277" y="393" width="1" height="11" fill="#00ff00"/>
<rect x="276" y="385" width="3" height="8" fill="#00ff00"/>
<rect x="277" y="386" width="1" height="6" fill="#000"/>
<rect x="281" y="383" width="1" height="2" fill="#ff0000"/>
<rect x="281" y="393" width="1" height="9" fill="#ff0000"/>
<rect x="280" y="385" width="3" height="8" fill="#ff0000"/>
<rect x="285" y="388" width="1" height="3" fill="#ff0000"/>
<rect x="285" y="397" width="1" height="22" fill="#ff0000"/>
<rect x="284" y="391" width="3" height="6" fill="#ff0000"/>
<rect x="289" y="384" width="1" height="10" fill="#00ff00"/>
<rect x="289" y="397" width="1" height="15" fill="#00ff00"/>
<rect x="288" y="394" width="3" height="3" fill="#00ff00"/>
<rect x="289" y="395" width="1" height="1" fill="#000"/>
<rect x="293" y="359" width="1" height="1" fill="#00ff00"/>
<rect x="293" y="396" width="1" height="6" fill="#00ff00"/>
<rect x="292" y="360" width="3" height="36" fill="#00ff00"/>
<rect x="293" y="361" width="1" height="34" fill="#000"/>
<rect x="297" y="358" width="1" height="1" fill="#ff0000"/>
<rect x="297" y="380" width="1" height="4" fill="#ff0000"/>
<rect x="296" y="359" width="3" height="21" fill="#ff0000"/>
<rect x="301" y="399" width="1" height="20" fill="#ff0000"/>
<rect x="300" y="377" width="3" height="22" fill="#ff0000"/>
<rect x="305" y="386" width="1" height="5" fill="#00ff00"/>
<rect x="305" y="398" width="1" height="12" fill="#00ff00"/>
<rect x="304" y="391" width="3" height="7" fill="#00ff00"/>
<rect x="305" y="392" width="1" height="5" fill="#000"/>
<rect x="309" y="386" width="1" height="3" fill="#00ff00"/>
<rect x="309" y="393" width="1" height="8" fill="#00ff00"/>
<rect x="308" y="389" width="3" height="4" fill="#00ff00"/>
<rect x="309" y="390" width="1" height="2" fill="#000"/>
<rect x="313" y="370" width="1" height="19" fill="#00ff00"/>
<rect x="313" y="391" width="1" height="9" fill="#00ff00"/>
<rect x="312" y="389" width="3" height="2" fill="#00ff00"/>
<rect x="317" y="391" width="1" height="7" fill="#00ff00"/>
<rect x="316" y="364" width="3" height="27" fill="#00ff00"/>
<rect x="317" y="365" width="1" height="25" fill="#000"/>
<rect x="321" y="315" width="1" height="6" fill="#00ff00"/>
<rect x="321" y="367" width="1" height="2" fill="#00ff00"/>
<rect x="320" y="321" width="3" height="46" fill="#00ff00"/>
<rect x="321" y="322" width="1" height="44" fill="#000"/>
<rect x="325" y="308" width="1" height="8" fill="#00ff00"/>
<rect x="325" y="323" width="1" height="16" fill="#00ff00"/>
<rect x="324" y="316" width="3" height="7" fill="#00ff00"/>
<rect x="325" y="317" width="1" height="5" fill="#000"/>
<rect x="329" y="308" width="1" height="5" fill="#00ff00"/>
<rect x="329" y="318" width="1" height="5" fill="#00ff00"/>
<rect x="328" y="313" width="3" height="5" fill="#00ff00"/>
<rect x="329" y="314" width="1" height="3" fill="#000"/>
<rect x="333" y="286" width="1" height="3" fill="#00ff00"/>
<rect x="333" y="324" width="1" height="1" fill="#00ff00"/>
<rect x="332" y="289" width="3" height="35" fill="#00ff00"/>
<rect x="333" y="290" width="1" height="33" fill="#000"/>
<rect x="337" y="296" width="1" height="5" fill="#ff0000"/>
<rect x="336" y="289" width="3" height="7" fill="#ff0000"/>
<rect x="341" y="286" width="1" height="7" fill="#ff0000"/>
<rect x="341" y="305" width="1" height="15" fill="#ff0000"/>
<rect x="340" y="293" width="3" height="12" fill="#ff0000"/>
<rect x="345" y="277" width="1" height="19" fill="#00ff00"/>
<rect x="345" y="306" width="1" height="2" fill="#00ff00"/>
<rect x="344" y="296" width="3" height="10" fill="#00ff00"/>
<rect x="345" y="297" width="1" height="8" fill="#000"/>
<rect x="349" y="295" width="1" height="1" fill="#ff0000"/>
<rect x="349" y="324" width="1" height="8" fill="#ff0000"/>
<rect x="348" y="296" width="3" height="28" fill="#ff0000"/>
<rect x="353" y="310" width="1" height="2" fill="#00ff00"/>
<rect x="353" y="324" width="1" height="1" fill="#00ff00"/>
<rect x="352" y="312" width="3" height="12" fill="#00ff00"/>
<rect x="353" y="313" width="1" height="10" fill="#000"/>
<rect x="357" y="299" width="1" height="9" fill="#00ff00"/>
<rect x="357" y="317" width="1" height="4" fill="#00ff00"/>
<rect x="356" y="308" width="3" height="9" fill="#00ff00"/>
<rect x="357" y="309" width="1" height="7" fill="#000"/>
<rect x="361" y="302" width="1" height="5" fill="#00ff00"/>
<rect x="361" y="309" width="1" height="14" fill="#00ff00"/>
<rect x="360" y="307" width="3" height="2" fill="#00ff00"/>
<rect x="365" y="277" width="1" height="8" fill="#00ff00"/>
<rect x="365" y="308" width="1" height="10" fill="#00ff00"/>
<rect x="364" y="285" width="3" height="23" fill="#00ff00"/>
<rect x="365" y="286" width="1" height="21" fill="#000"/>
<rect x="369" y="273" width="1" height="11" fill="#ff0000"/>
<rect x="369" y="291" width="1" height="15" fill="#ff0000"/>
<rect x="368" y="284" width="3" height="7" fill="#ff0000"/>
<rect x="373" y="283" width="1" height="6" fill="#ff0000"/>
<rect x="373" y="293" width="1" height="14" fill="#ff0000"/>
<rect x="372" y="289" width="3" height="4" fill="#ff0000"/>
<rect x="377" y="267" width="1" height="7" fill="#00ff00"/>
<rect x="377" y="293" width="1" height="1" fill="#00ff00"/>
<rect x="376" y="274" width="3" height="19" fill="#00ff00"/>
<rect x="377" y="275" width="1" height="17" fill="#000"/>
<rect x="381" y="250" width="1" height="9" fill="#00ff00"/>
<rect x="381" y="276" width="1" height="2" fill="#00ff00"/>
<rect x="380" y="259" width="3" height="17" fill="#00ff00"/>
<rect x="381" y="260" width="1" height="15" fill="#000"/>
<rect x="385" y="249" width="1" height="7" fill="#00ff00"/>
<rect x="385" y="261" width="1" height="2" fill="#00ff00"/>
<rect x="384" y="256" width="3" height="5" fill="#00ff00"/>
<rect x="385" y="257" width="1" height="3" fill="#000"/>
<rect x="389" y="228" width="1" height="15" fill="#00ff00"/>
<rect x="388" y="243" width="3" height="15" fill="#00ff00"/>
<rect x="389" y="244" width="1" height="13" fill="#000"/>
<rect x="393" y="222" width="1" height="15" fill="#00ff00"/>
<rect x="392" y="237" width="3" height="8" fill="#00ff00"/>
<rect x="393" y="238" width="1" height="6" fill="#000"/>
<rect x="397" y="226" width="1" height="11" fill="#ff0000"/>
<rect x="397" y="239" width="1" height="10" fill="#ff0000"/>
<rect x="396" y="237" width="3" height="2" fill="#ff0000"/>
<rect x="401" y="229" width="1" height="6" fill="#00ff00"/>
<rect x="401" y="240" width="1" height="6" fill="#00ff00"/>
<rect x="400" y="235" width="3" height="5" fill="#00ff00"/>
<rect x="401" y="236" width="1" height="3" fill="#000"/>
<rect x="405" y="222" width="1" height="3" fill="#00ff00"/>
<rect x="405" y="236" width="1" height="3" fill="#00ff00"/>
<rect x="404" y="225" width="3" height="11" fill="#00ff00"/>
<rect x="405" y="226" width="1" height="9" fill="#000"/>
<rect x="409" y="222" width="1" height="2" fill="#ff0000"/>
<rect x="409" y="243" width="1" height="5" fill="#ff0000"/>
<rect x="408" y="224" width="3" height="19" fill="#ff0000"/>
<rect x="413" y="216" width="1" height="9" fill="#00ff00"/>
<rect x="413" y="243" width="1" height="1" fill="#00ff00"/>
<rect x="412" y="225" width="3" height="18" fill="#00ff00"/>
<rect x="413" y="226" width="1" height="16" fill="#000"/>
<rect x="417" y="216" width="1" height="7" fill="#ff0000"/>
<rect x="417" y="244" width="1" height="20" fill="#ff0000"/>
<rect x="416" y="223" width="3" height="21" fill="#ff0000"/>
<rect x="421" y="225" width="1" height="17" fill="#ff0000"/>
<rect x="421" y="262" width="1" height="13" fill="#ff0000"/>
<rect x="420" y="242" width="3" height="20" fill="#ff0000"/>
<rect x="425" y="252" width="1" height="9" fill="#ff0000"/>
<rect x="425" y="263" width="1" height="15" fill="#ff0000"/>
<rect x="424" y="261" width="3" height="2" fill="#ff0000"/>
<rect x="429" y="252" width="1" height="3" fill="#00ff00"/>
<rect x="429" y="264" width="1" height="5" fill="#00ff00"/>
<rect x="428" y="255" width="3" height="9" fill="#00ff00"/>
<rect x="429" y="256" width="1" height="7" fill="#000"/>
<rect x="433" y="248" width="1" height="2" fill="#ff0000"/>
<rect x="433" y="264" width="1" height="3" fill="#ff0000"/>
<rect x="432" y="250" width="3" height="14" fill="#ff0000"/>
<rect x="437" y="259" width="1" height="4" fill="#ff0000"/>
<rect x="437" y="297" width="1" height="3" fill="#ff0000"/>
<rect x="436" y="263" width="3" height="34" fill="#ff0000"/>
<rect x="441" y="279" width="1" height="17" fill="#ff0000"/>
<rect x="441" y="305" width="1" height="14" fill="#ff0000"/>
<rect x="440" y="296" width="3" height="9" fill="#ff0000"/>
<rect x="445" y="279" width="1" height="2" fill="#00ff00"/>
<rect x="445" y="305" width="1" height="2" fill="#00ff00"/>
<rect x="444" y="281" width="3" height="24" fill="#00ff00"/>
<rect x="445" y="282" width="1" height="22" fill="#000"/>
<rect x="449" y="279" width="1" height="1" fill="#ff0000"/>
<rect x="449" y="287" width="1" height="2" fill="#ff0000"/>
<rect x="448" y="280" width="3" height="7" fill="#ff0000"/>
<rect x="453" y="277" width="1" height="2" fill="#00ff00"/>
<rect x="453" y="297" width="1" height="3" fill="#00ff00"/>
<rect x="452" y="279" width="3" height="18" fill="#00ff00"/>
<rect x="453" y="280" width="1" height="16" fill="#000"/>
<rect x="457" y="257" width="1" height="2" fill="#00ff00"/>
<rect x="457" y="280" width="1" height="4" fill="#00ff00"/>
<rect x="456" y="259" width="3" height="21" fill="#00ff00"/>
<rect x="457" y="260" width="1" height="19" fill="#000"/>
<rect x="461" y="230" width="1" height="29" fill="#ff0000"/>
<rect x="461" y="275" width="1" height="2" fill="#ff0000"/>
<rect x="460" y="259" width="3" height="16" fill="#ff0000"/>
<rect x="465" y="266" width="1" height="5" fill="#00ff00"/>
<rect x="465" y="275" width="1" height="8" fill="#00ff00"/>
<rect x="464" y="271" width="3" height="4" fill="#00ff00"/>
<rect x="465" y="272" width="1" height="2" fill="#000"/>
<rect x="469" y="255" width="1" height="8" fill="#00ff00"/>
<rect x="469" y="272" width="1" height="3" fill="#00ff00"/>
<rect x="468" y="263" width="3" height="9" fill="#00ff00"/>
<rect x="469" y="264" width="1" height="7" fill="#000"/>
<rect x="473" y="257" width="1" height="6" fill="#ff0000"/>
<rect x="473" y="265" width="1" height="3" fill="#ff0000"/>
<rect x="472" y="263" width="3" height="2" fill="#ff0000"/>
<rect x="477" y="238" width="1" height="18" fill="#00ff00"/>
<rect x="477" y="266" width="1" height="1" fill="#00ff00"/>
<rect x="476" y="256" width="3" height="10" fill="#00ff00"/>
<rect x="477" y="257" width="1" height="8" fill="#000"/>
<rect x="481" y="243" width="1" height="3" fill="#00ff00"/>
<rect x="481" y="258" width="1" height="10" fill="#00ff00"/>
<rect x="480" y="246" width="3" height="12" fill="#00ff00"/>
<rect x="481" y="247" width="1" height="10" fill="#000"/>
<rect x="485" y="222" width="1" height="15" fill="#00ff00"/>
<rect x="485" y="247" width="1" height="14" fill="#00ff00"/>
<rect x="484" y="237" width="3" height="10" fill="#00ff00"/>
<rect x="485" y="238" width="1" height="8" fill="#000"/>
<rect x="489" y="231" width="1" height="5" fill="#ff0000"/>
<rect x="489" y="247" width="1" height="10" fill="#ff0000"/>
<rect x="488" y="236" width="3" height="11" fill="#ff0000"/>
<rect x="493" y="223" width="1" height="15" fill="#00ff00"/>
<rect x="493" y="247" width="1" height="19" fill="#00ff00"/>
<rect x="492" y="238" width="3" height="9" fill="#00ff00"/>
<rect x="493" y="239" width="1" height="7" fill="#000"/>
<rect x="497" y="230" width="1" height="8" fill="#ff0000"/>
<rect x="497" y="246" width="1" height="1" fill="#ff0000"/>
<rect x="496" y="238" width="3" height="8" fill="#ff0000"/>
<rect x="501" y="232" width="1" height="7" fill="#00ff00"/>
<rect x="501" y="246" width="1" height="1" fill="#00ff00"/>
<rect x="500" y="239" width="3" height="7" fill="#00ff00"/>
<rect x="501" y="240" width="1" height="5" fill="#000"/>
<rect x="505" y="227" width="1" height="5" fill="#00ff00"/>
<rect x="504" y="232" width="3" height="9" fill="#00ff00"/>
<rect x="505" y="233" width="1" height="7" fill="#000"/>
<rect x="509" y="228" width="1" height="4" fill="#ff0000"/>
<rect x="509" y="254" width="1" height="4" fill="#ff0000"/>
<rect x="508" y="232" width="3" height="22" fill="#ff0000"/>
<rect x="513" y="246" width="1" height="2" fill="#00ff00"/>
<rect x="513" y="254" width="1" height="3" fill="#00ff00"/>
<rect x="512" y="248" width="3" height="6" fill="#00ff00"/>
<rect x="513" y="249" width="1" height="4" fill="#000"/>
<rect x="517" y="231" width="1" height="1" fill="#00ff00"/>
<rect x="517" y="252" width="1" height="5" fill="#00ff00"/>
<rect x="516" y="232" width="3" height="20" fill="#00ff00"/>
<rect x="517" y="233" width="1" height="18" fill="#000"/>
<rect x="521" y="229" width="1" height="4" fill="#ff0000"/>
<rect x="521" y="246" width="1" height="4" fill="#ff0000"/>
<rect x="520" y="233" width="3" height="13" fill="#ff0000"/>
<rect x="525" y="242" width="1" height="3" fill="#ff0000"/>
<rect x="525" y="247" width="1" height="10" fill="#ff0000"/>
<rect x="524" y="245" width="3" height="2" fill="#ff0000"/>
<rect x="529" y="240" width="1" height="3" fill="#00ff00"/>
<rect x="529" y="247" width="1" height="5" fill="#00ff00"/>
<rect x="528" y="243" width="3" height="4" fill="#00ff00"/>
<rect x="529" y="244" width="1" height="2" fill="#000"/>
<rect x="533" y="229" width="1" height="4" fill="#00ff00"/>
<rect x="533" y="246" width="1" height="16" fill="#00ff00"/>
<rect x="532" y="233" width="3" height="13" fill="#00ff00"/>
<rect x="533" y="234" width="1" height="11" fill="#000"/>
<rect x="537" y="230" width="1" height="3" fill="#ff0000"/>
<rect x="536" y="233" width="3" height="46" fill="#ff0000"/>
<rect x="541" y="256" width="1" height="22" fill="#ff0000"/>
<rect x="541" y="280" width="1" height="6" fill="#ff0000"/>
<rect x="540" y="278" width="3" height="2" fill="#ff0000"/>
<rect x="545" y="269" width="1" height="9" fill="#ff0000"/>
<rect x="545" y="290" width="1" height="1" fill="#ff0000"/>
<rect x="544" y="278" width="3" height="12" fill="#ff0000"/>
<rect x="549" y="278" width="1" height="12" fill="#ff0000"/>
<rect x="549" y="300" width="1" height="5" fill="#ff0000"/>
<rect x="548" y="290" width="3" height="10" fill="#ff0000"/>
<rect x="553" y="282" width="1" height="2" fill="#00ff00"/>
<rect x="553" y="300" width="1" height="7" fill="#00ff00"/>
<rect x="552" y="284" width="3" height="16" fill="#00ff00"/>
<rect x="553" y="285" width="1" height="14" fill="#000"/>
<rect x="557" y="275" width="1" height="9" fill="#ff0000"/>
<rect x="557" y="291" width="1" height="19" fill="#ff0000"/>
<rect x="556" y="284" width="3" height="7" fill="#ff0000"/>
<rect x="561" y="271" width="1" height="16" fill="#00ff00"/>
<rect x="561" y="292" width="1" height="7" fill="#00ff00"/>
<rect x="560" y="287" width="3" height="5" fill="#00ff00"/>
<rect x="561" y="288" width="1" height="3" fill="#000"/>
<rect x="565" y="274" width="1" height="3" fill="#00ff00"/>
<rect x="565" y="289" width="1" height="5" fill="#00ff00"/>
<rect x="564" y="277" width="3" height="12" fill="#00ff00"/>
<rect x="565" y="278" width="1" height="10" fill="#000"/>
<rect x="569" y="273" width="1" height="1" fill="#00ff00"/>
<rect x="569" y="279" width="1" height="5" fill="#00ff00"/>
<rect x="568" y="274" width="3" height="5" fill="#00ff00"/>
<rect x="569" y="275" width="1" height="3" fill="#000"/>
<rect x="573" y="271" width="1" height="11" fill="#ff0000"/>
<rect x="573" y="293" width="1" height="3" fill="#ff0000"/>
<rect x="572" y="282" width="3" height="11" fill="#ff0000"/>
<rect x="577" y="289" width="1" height="2" fill="#ff0000"/>
<rect x="577" y="294" width="1" height="11" fill="#ff0000"/>
<rect x="576" y="291" width="3" height="3" fill="#ff0000"/>
<rect x="581" y="288" width="1" height="4" fill="#ff0000"/>
<rect x="581" y="307" width="1" height="11" fill="#ff0000"/>
<rect x="580" y="292" width="3" height="15" fill="#ff0000"/>
<rect x="585" y="291" width="1" height="14" fill="#ff0000"/>
<rect x="585" y="311" width="1" height="5" fill="#ff0000"/>
<rect x="584" y="305" width="3" height="6" fill="#ff0000"/>
<rect x="589" y="300" width="1" height="9" fill="#ff0000"/>
<rect x="589" y="311" width="1" height="8" fill="#ff0000"/>
<rect x="588" y="309" width="3" height="2" fill="#ff0000"/>
<rect x="593" y="300" width="1" height="4" fill="#00ff00"/>
<rect x="593" y="311" width="1" height="2" fill="#00ff00"/>
<rect x="592" y="304" width="3" height="7" fill="#00ff00"/>
<rect x="593" y="305" width="1" height="5" fill="#000"/>
<rect x="597" y="300" width="1" height="5" fill="#ff0000"/>
<rect x="597" y="322" width="1" height="8" fill="#ff0000"/>
<rect x="596" y="305" width="3" height="17" fill="#ff0000"/>
<rect x="601" y="317" width="1" height="3" fill="#ff0000"/>
<rect x="601" y="352" width="1" height="3" fill="#ff0000"/>
<rect x="600" y="320" width="3" height="32" fill="#ff0000"/>
<rect x="605" y="347" width="1" height="2" fill="#ff0000"/>
<rect x="605" y="383" width="1" height="15" fill="#ff0000"/>
<rect x="604" y="349" width="3" height="34" fill="#ff0000"/>
<rect x="609" y="377" width="1" height="4" fill="#ff0000"/>
<rect x="609" y="388" width="1" height="17" fill="#ff0000"/>
<rect x="608" y="381" width="3" height="7" fill="#ff0000"/>
<rect x="613" y="370" width="1" height="12" fill="#00ff00"/>
<rect x="613" y="388" width="1" height="18" fill="#00ff00"/>
<rect x="612" y="382" width="3" height="6" fill="#00ff00"/>
<rect x="613" y="383" width="1" height="4" fill="#000"/>
<rect x="617" y="369" width="1" height="7" fill="#00ff00"/>
<rect x="617" y="383" width="1" height="5" fill="#00ff00"/>
<rect x="616" y="376" width="3" height="7" fill="#00ff00"/>
<rect x="617" y="377" width="1" height="5" fill="#000"/>
<rect x="621" y="368" width="1" height="8" fill="#ff0000"/>
<rect x="620" y="376" width="3" height="11" fill="#ff0000"/>
<rect x="625" y="368" width="1" height="8" fill="#00ff00"/>
<rect x="625" y="387" width="1" height="8" fill="#00ff00"/>
<rect x="624" y="376" width="3" height="11" fill="#00ff00"/>
<rect x="625" y="377" width="1" height="9" fill="#000"/>
<rect x="629" y="366" width="1" height="9" fill="#ff0000"/>
<rect x="629" y="380" width="1" height="4" fill="#ff0000"/>
<rect x="628" y="375" width="3" height="5" fill="#ff0000"/>
<rect x="633" y="363" width="1" height="1" fill="#00ff00"/>
<rect x="633" y="379" width="1" height="6" fill="#00ff00"/>
<rect x="632" y="364" width="3" height="15" fill="#00ff00"/>
<rect x="633" y="365" width="1" height="13" fill="#000"/>
<rect x="637" y="342" width="1" height="10" fill="#00ff00"/>
<rect x="637" y="366" width="1" height="8" fill="#00ff00"/>
<rect x="636" y="352" width="3" height="14" fill="#00ff00"/>
<rect x="637" y="353" width="1" height="12" fill="#000"/>
<rect x="641" y="342" width="1" height="11" fill="#ff0000"/>
<rect x="641" y="360" width="1" height="1" fill="#ff0000"/>
<rect x="640" y="353" width="3" height="7" fill="#ff0000"/>
<rect x="645" y="349" width="1" height="5" fill="#00ff00"/>
<rect x="645" y="359" width="1" height="3" fill="#00ff00"/>
<rect x="644" y="354" width="3" height="5" fill="#00ff00"/>
<rect x="645" y="355" width="1" height="3" fill="#000"/>
<rect x="649" y="339" width="1" height="7" fill="#00ff00"/>
<rect x="649" y="355" width="1" height="5" fill="#00ff00"/>
<rect x="648" y="346" width="3" height="9" fill="#00ff00"/>
<rect x="649" y="347" width="1" height="7" fill="#000"/>
<rect x="653" y="340" width="1" height="5" fill="#ff0000"/>
<rect x="653" y="384" width="1" height="3" fill="#ff0000"/>
<rect x="652" y="345" width="3" height="39" fill="#ff0000"/>
<rect x="657" y="312" width="1" height="9" fill="#00ff00"/>
<rect x="657" y="383" width="1" height="12" fill="#00ff00"/>
<rect x="656" y="321" width="3" height="62" fill="#00ff00"/>
<rect x="657" y="322" width="1" height="60" fill="#000"/>
<rect x="661" y="316" width="1" height="5" fill="#ff0000"/>
<rect x="661" y="341" width="1" height="4" fill="#ff0000"/>
<rect x="660" y="321" width="3" height="20" fill="#ff0000"/>
<rect x="665" y="333" width="1" height="7" fill="#ff0000"/>
<rect x="665" y="348" width="1" height="6" fill="#ff0000"/>
<rect x="664" y="340" width="3" height="8" fill="#ff0000"/>
<rect x="669" y="328" width="1" height="3" fill="#00ff00"/>
<rect x="669" y="344" width="1" height="11" fill="#00ff00"/>
<rect x="668" y="331" width="3" height="13" fill="#00ff00"/>
<rect x="669" y="332" width="1" height="11" fill="#000"/>
<rect x="673" y="324" width="1" height="2" fill="#00ff00"/>
<rect x="673" y="332" width="1" height="4" fill="#00ff00"/>
<rect x="672" y="326" width="3" height="6" fill="#00ff00"/>
<rect x="673" y="327" width="1" height="4" fill="#000"/>
<rect x="677" y="292" width="1" height="2" fill="#00ff00"/>
<rect x="677" y="328" width="1" height="1" fill="#00ff00"/>
<rect x="676" y="294" width="3" height="34" fill="#00ff00"/>
<rect x="677" y="295" width="1" height="32" fill="#000"/>
<rect x="681" y="291" width="1" height="3" fill="#ff0000"/>
<rect x="681" y="311" width="1" height="5" fill="#ff0000"/>
<rect x="680" y="294" width="3" height="17" fill="#ff0000"/>
<rect x="685" y="302" width="1" height="7" fill="#ff0000"/>
<rect x="685" y="339" width="1" height="7" fill="#ff0000"/>
<rect x="684" y="309" width="3" height="30" fill="#ff0000"/>
<rect x="689" y="329" width="1" height="2" fill="#00ff00"/>
<rect x="689" y="339" width="1" height="7" fill="#00ff00"/>
<rect x="688" y="331" width="3" height="8" fill="#00ff00"/>
<rect x="689" y="332" width="1" height="6" fill="#000"/>
<rect x="693" y="327" width="1" height="17" fill="#ff0000"/>
<rect x="693" y="358" width="1" height="3" fill="#ff0000"/>
<rect x="692" y="344" width="3" height="14" fill="#ff0000"/>
<rect x="697" y="352" width="1" height="4" fill="#ff0000"/>
<rect x="697" y="366" width="1" height="5" fill="#ff0000"/>
<rect x="696" y="356" width="3" height="10" fill="#ff0000"/>
<rect x="701" y="358" width="1" height="6" fill="#ff0000"/>
<rect x="701" y="377" width="1" height="14" fill="#ff0000"/>
<rect x="700" y="364" width="3" height="13" fill="#ff0000"/>
<rect x="705" y="342" width="1" height="4" fill="#00ff00"/>
<rect x="705" y="377" width="1" height="9" fill="#00ff00"/>
<rect x="704" y="346" width="3" height="31" fill="#00ff00"/>
<rect x="705" y="347" width="1" height="29" fill="#000"/>
<rect x="709" y="338" width="1" height="8" fill="#ff0000"/>
<rect x="709" y="360" width="1" height="5" fill="#ff0000"/>
<rect x="708" y="346" width="3" height="14" fill="#ff0000"/>
<rect x="713" y="314" width="1" height="24" fill="#00ff00"/>
<rect x="713" y="360" width="1" height="6" fill="#00ff00"/>
<rect x="712" y="338" width="3" height="22" fill="#00ff00"/>
<rect x="713" y="339" width="1" height="20" fill="#000"/>
<rect x="717" y="334" width="1" height="4" fill="#ff0000"/>
<rect x="717" y="351" width="1" height="4" fill="#ff0000"/>
<rect x="716" y="338" width="3" height="13" fill="#ff0000"/>
<rect x="721" y="344" width="1" height="1" fill="#ff0000"/>
<rect x="721" y="347" width="1" height="15" fill="#ff0000"/>
<rect x="720" y="345" width="3" height="2" fill="#ff0000"/>
<rect x="725" y="338" width="1" height="11" fill="#ff0000"/>
<rect x="725" y="354" width="1" height="3" fill="#ff0000"/>
<rect x="724" y="349" width="3" height="5" fill="#ff0000"/>
<rect x="729" y="346" width="1" height="6" fill="#ff0000"/>
<rect x="729" y="361" width="1" height="16" fill="#ff0000"/>
<rect x="728" y="352" width="3" height="9" fill="#ff0000"/>
<rect x="733" y="341" width="1" height="7" fill="#00ff00"/>
<rect x="733" y="361" width="1" height="3" fill="#00ff00"/>
<rect x="732" y="348" width="3" height="13" fill="#00ff00"/>
<rect x="733" y="349" width="1" height="11" fill="#000"/>
<rect x="737" y="335" width="1" height="12" fill="#ff0000"/>
<rect x="737" y="350" width="1" height="6" fill="#ff0000"/>
<rect x="736" y="347" width="3" height="3" fill="#ff0000"/>
<rect x="741" y="340" width="1" height="9" fill="#ff0000"/>
<rect x="741" y="355" width="1" height="5" fill="#ff0000"/>
<rect x="740" y="349" width="3" height="6" fill="#ff0000"/>
<rect x="745" y="349" width="1" height="3" fill="#00ff00"/>
<rect x="745" y="355" width="1" height="15" fill="#00ff00"/>
<rect x="744" y="352" width="3" height="3" fill="#00ff00"/>
<rect x="745" y="353" width="1" height="1" fill="#000"/>
<rect x="749" y="350" width="1" height="2" fill="#ff0000"/>
<rect x="749" y="383" width="1" height="1" fill="#ff0000"/>
<rect x="748" y="352" width="3" height="31" fill="#ff0000"/>
<rect x="753" y="370" width="1" height="3" fill="#00ff00"/>
<rect x="753" y="382" width="1" height="3" fill="#00ff00"/>
<rect x="752" y="373" width="3" height="9" fill="#00ff00"/>
<rect x="753" y="374" width="1" height="7" fill="#000"/>
<rect x="757" y="356" width="1" height="11" fill="#ff0000"/>
<rect x="757" y="369" width="1" height="9" fill="#ff0000"/>
<rect x="756" y="367" width="3" height="2" fill="#ff0000"/>
<rect x="761" y="371" width="1" height="1" fill="#ff0000"/>
<rect x="761" y="398" width="1" height="1" fill="#ff0000"/>
<rect x="760" y="372" width="3" height="26" fill="#ff0000"/>
<rect x="765" y="390" width="1" height="6" fill="#ff0000"/>
<rect x="765" y="411" width="1" height="6" fill="#ff0000"/>
<rect x="764" y="396" width="3" height="15" fill="#ff0000"/>
<rect x="769" y="391" width="1" height="3" fill="#00ff00"/>
<rect x="769" y="411" width="1" height="2" fill="#00ff00"/>
<rect x="768" y="394" width="3" height="17" fill="#00ff00"/>
<rect x="769" y="395" width="1" height="15" fill="#000"/>
<rect x="773" y="391" width="1" height="3" fill="#ff0000"/>
<rect x="773" y="407" width="1" height="10" fill="#ff0000"/>
<rect x="772" y="394" width="3" height="13" fill="#ff0000"/>
<rect x="777" y="401" width="1" height="5" fill="#ff0000"/>
<rect x="777" y="436" width="1" height="1" fill="#ff0000"/>
<rect x="776" y="406" width="3" height="30" fill="#ff0000"/>
<rect x="781" y="394" width="1" height="5" fill="#00ff00"/>
<rect x="781" y="436" width="1" height="2" fill="#00ff00"/>
<rect x="780" y="399" width="3" height="37" fill="#00ff00"/>
<rect x="781" y="400" width="1" height="35" fill="#000"/>
<rect x="785" y="392" width="1" height="7" fill="#ff0000"/>
<rect x="785" y="401" width="1" height="6" fill="#ff0000"/>
<rect x="784" y="399" width="3" height="2" fill="#ff0000"/>
<rect x="789" y="395" width="1" height="5" fill="#ff0000"/>
<rect x="789" y="405" width="1" height="4" fill="#ff0000"/>
<rect x="788" y="400" width="3" height="5" fill="#ff0000"/>
<rect x="793" y="357" width="1" height="8" fill="#00ff00"/>
<rect x="793" y="405" width="1" height="3" fill="#00ff00"/>
<rect x="792" y="365" width="3" height="40" fill="#00ff00"/>
<rect x="793" y="366" width="1" height="38" fill="#000"/>
<rect x="797" y="326" width="1" height="9" fill="#00ff00"/>
<rect x="797" y="367" width="1" height="13" fill="#00ff00"/>
<rect x="796" y="335" width="3" height="32" fill="#00ff00"/>
<rect x="797" y="336" width="1" height="30" fill="#000"/>
<rect x="801" y="329" width="1" height="6" fill="#ff0000"/>
<rect x="801" y="357" width="1" height="8" fill="#ff0000"/>
<rect x="800" y="335" width="3" height="22" fill="#ff0000"/>
<rect x="805" y="306" width="1" height="9" fill="#00ff00"/>
<rect x="804" y="315" width="3" height="42" fill="#00ff00"/>
<rect x="805" y="316" width="1" height="40" fill="#000"/>
<rect x="809" y="306" width="1" height="7" fill="#00ff00"/>
<rect x="809" y="316" width="1" height="5" fill="#00ff00"/>
<rect x="808" y="313" width="3" height="3" fill="#00ff00"/>
<rect x="809" y="314" width="1" height="1" fill="#000"/>
<rect x="813" y="306" width="1" height="6" fill="#00ff00"/>
<rect x="813" y="335" width="1" height="2" fill="#00ff00"/>
<rect x="812" y="312" width="3" height="23" fill="#00ff00"/>
<rect x="813" y="313" width="1" height="21" fill="#000"/>
<rect x="817" y="298" width="1" height="14" fill="#ff0000"/>
<rect x="817" y="326" width="1" height="1" fill="#ff0000"/>
<rect x="816" y="312" width="3" height="14" fill="#ff0000"/>
<rect x="821" y="322" width="1" height="2" fill="#ff0000"/>
<rect x="821" y="328" width="1" height="21" fill="#ff0000"/>
<rect x="820" y="324" width="3" height="4" fill="#ff0000"/>
<rect x="825" y="322" width="1" height="4" fill="#ff0000"/>
<rect x="825" y="360" width="1" height="1" fill="#ff0000"/>
<rect x="824" y="326" width="3" height="34" fill="#ff0000"/>
<rect x="829" y="344" width="1" height="5" fill="#00ff00"/>
<rect x="829" y="360" width="1" height="6" fill="#00ff00"/>
<rect x="828" y="349" width="3" height="11" fill="#00ff00"/>
<rect x="829" y="350" width="1" height="9" fill="#000"/>
<rect x="833" y="334" width="1" height="2" fill="#00ff00"/>
<rect x="833" y="350" width="1" height="5" fill="#00ff00"/>
<rect x="832" y="336" width="3" height="14" fill="#00ff00"/>
<rect x="833" y="337" width="1" height="12" fill="#000"/>
<rect x="837" y="333" width="1" height="4" fill="#ff0000"/>
<rect x="837" y="340" width="1" height="7" fill="#ff0000"/>
<rect x="836" y="337" width="3" height="3" fill="#ff0000"/>
<rect x="841" y="328" width="1" height="11" fill="#ff0000"/>
<rect x="841" y="347" width="1" height="14" fill="#ff0000"/>
<rect x="840" y="339" width="3" height="8" fill="#ff0000"/>
<rect x="845" y="303" width="1" height="4" fill="#00ff00"/>
<rect x="845" y="347" width="1" height="1" fill="#00ff00"/>
<rect x="844" y="307" width="3" height="40" fill="#00ff00"/>
<rect x="845" y="308" width="1" height="38" fill="#000"/>
<rect x="849" y="305" width="1" height="1" fill="#ff0000"/>
<rect x="849" y="324" width="1" height="7" fill="#ff0000"/>
<rect x="848" y="306" width="3" height="18" fill="#ff0000"/>
<rect x="853" y="320" width="1" height="2" fill="#ff0000"/>
<rect x="853" y="345" width="1" height="6" fill="#ff0000"/>
<rect x="852" y="322" width="3" height="23" fill="#ff0000"/>
<rect x="857" y="322" width="1" height="8" fill="#00ff00"/>
<rect x="857" y="345" width="1" height="1" fill="#00ff00"/>
<rect x="856" y="330" width="3" height="15" fill="#00ff00"/>
<rect x="857" y="331" width="1" height="13" fill="#000"/>
<rect x="861" y="328" width="1" height="2" fill="#ff0000"/>
<rect x="861" y="343" width="1" height="1" fill="#ff0000"/>
<rect x="860" y="330" width="3" height="13" fill="#ff0000"/>
<rect x="865" y="326" width="1" height="7" fill="#00ff00"/>
<rect x="865" y="343" width="1" height="2" fill="#00ff00"/>
<rect x="864" y="333" width="3" height="10" fill="#00ff00"/>
<rect x="865" y="334" width="1" height="8" fill="#000"/>
<rect x="869" y="325" width="1" height="3" fill="#00ff00"/>
<rect x="869" y="343" width="1" height="2" fill="#00ff00"/>
<rect x="868" y="328" width="3" height="15" fill="#00ff00"/>
<rect x="869" y="329" width="1" height="13" fill="#000"/>
<rect x="873" y="317" width="1" height="2" fill="#00ff00"/>
<rect x="873" y="329" width="1" height="2" fill="#00ff00"/>
<rect x="872" y="319" width="3" height="10" fill="#00ff00"/>
<rect x="873" y="320" width="1" height="8" fill="#000"/>
<rect x="877" y="315" width="1" height="4" fill="#00ff00"/>
<rect x="877" y="326" width="1" height="3" fill="#00ff00"/>
<rect x="876" y="319" width="3" height="7" fill="#00ff00"/>
<rect x="877" y="320" width="1" height="5" fill="#000"/>
<rect x="881" y="305" width="1" height="11" fill="#00ff00"/>
<rect x="881" y="321" width="1" height="1" fill="#00ff00"/>
<rect x="880" y="316" width="3" height="5" fill="#00ff00"/>
<rect x="881" y="317" width="1" height="3" fill="#000"/>
<rect x="885" y="308" width="1" height="8" fill="#ff0000"/>
<rect x="885" y="324" width="1" height="12" fill="#ff0000"/>
<rect x="884" y="316" width="3" height="8" fill="#ff0000"/>
<rect x="889" y="314" width="1" height="8" fill="#ff0000"/>
<rect x="889" y="327" width="1" height="6" fill="#ff0000"/>
<rect x="888" y="322" width="3" height="5" fill="#ff0000"/>
<rect x="893" y="292" width="1" height="9" fill="#00ff00"/>
<rect x="893" y="327" width="1" height="2" fill="#00ff00"/>
<rect x="892" y="301" width="3" height="26" fill="#00ff00"/>
<rect x="893" y="302" width="1" height="24" fill="#000"/>
<rect x="897" y="279" width="1" height="9" fill="#00ff00"/>
<rect x="897" y="302" width="1" height="7" fill="#00ff00"/>
<rect x="896" y="288" width="3" height="14" fill="#00ff00"/>
<rect x="897" y="289" width="1" height="12" fill="#000"/>
<rect x="901" y="286" width="1" height="2" fill="#ff0000"/>
<rect x="901" y="311" width="1" height="13" fill="#ff0000"/>
<rect x="900" y="288" width="3" height="23" fill="#ff0000"/>
<rect x="905" y="305" width="1" height="4" fill="#ff0000"/>
<rect x="905" y="311" width="1" height="10" fill="#ff0000"/>
<rect x="904" y="309" width="3" height="2" fill="#ff0000"/>
<rect x="909" y="305" width="1" height="4" fill="#00ff00"/>
<rect x="909" y="311" width="1" height="12" fill="#00ff00"/>
<rect x="908" y="309" width="3" height="2" fill="#00ff00"/>
<rect x="913" y="298" width="1" height="11" fill="#ff0000"/>
<rect x="913" y="311" width="1" height="7" fill="#ff0000"/>
<rect x="912" y="309" width="3" height="2" fill="#ff0000"/>
<rect x="917" y="292" width="1" height="3" fill="#00ff00"/>
<rect x="917" y="311" width="1" height="5" fill="#00ff00"/>
<rect x="916" y="295" width="3" height="16" fill="#00ff00"/>
<rect x="917" y="296" width="1" height="14" fill="#000"/>
<rect x="921" y="291" width="1" height="4" fill="#ff0000"/>
<rect x="921" y="302" width="1" height="10" fill="#ff0000"/>
<rect x="920" y="295" width="3" height="7" fill="#ff0000"/>
<rect x="925" y="289" width="1" height="6" fill="#00ff00"/>
<rect x="925" y="301" width="1" height="2" fill="#00ff00"/>
<rect x="924" y="295" width="3" height="6" fill="#00ff00"/>
<rect x="925" y="296" width="1" height="4" fill="#000"/>
<rect x="929" y="285" width="1" height="5" fill="#00ff00"/>
<rect x="929" y="297" width="1" height="2" fill="#00ff00"/>
<rect x="928" y="290" width="3" height="7" fill="#00ff00"/>
<rect x="929" y="291" width="1" height="5" fill="#000"/>
<rect x="933" y="268" width="1" height="3" fill="#ff0000"/>
<rect x="933" y="287" width="1" height="1" fill="#ff0000"/>
<rect x="932" y="271" width="3" height="16" fill="#ff0000"/>
<rect x="937" y="277" width="1" height="2" fill="#00ff00"/>
<rect x="937" y="287" width="1" height="7" fill="#00ff00"/>
<rect x="936" y="279" width="3" height="8" fill="#00ff00"/>
<rect x="937" y="280" width="1" height="6" fill="#000"/>
<rect x="941" y="244" width="1" height="9" fill="#00ff00"/>
<rect x="941" y="280" width="1" height="4" fill="#00ff00"/>
<rect x="940" y="253" width="3" height="27" fill="#00ff00"/>
<rect x="941" y="254" width="1" height="25" fill="#000"/>
<rect x="945" y="246" width="1" height="1" fill="#00ff00"/>
<rect x="945" y="255" width="1" height="8" fill="#00ff00"/>
<rect x="944" y="247" width="3" height="8" fill="#00ff00"/>
<rect x="945" y="248" width="1" height="6" fill="#000"/>
<rect x="949" y="241" width="1" height="6" fill="#ff0000"/>
<rect x="949" y="302" width="1" height="16" fill="#ff0000"/>
<rect x="948" y="247" width="3" height="55" fill="#ff0000"/>
<rect x="953" y="270" width="1" height="7" fill="#00ff00"/>
<rect x="953" y="302" width="1" height="4" fill="#00ff00"/>
<rect x="952" y="277" width="3" height="25" fill="#00ff00"/>
<rect x="953" y="278" width="1" height="23" fill="#000"/>
<rect x="957" y="261" width="1" height="2" fill="#00ff00"/>
<rect x="957" y="278" width="1" height="9" fill="#00ff00"/>
<rect x="956" y="263" width="3" height="15" fill="#00ff00"/>
<rect x="957" y="264" width="1" height="13" fill="#000"/>
<rect x="961" y="261" width="1" height="2" fill="#ff0000"/>
<rect x="961" y="267" width="1" height="6" fill="#ff0000"/>
<rect x="960" y="263" width="3" height="4" fill="#ff0000"/>
<rect x="965" y="233" width="1" height="27" fill="#00ff00"/>
<rect x="965" y="266" width="1" height="12" fill="#00ff00"/>
<rect x="964" y="260" width="3" height="6" fill="#00ff00"/>
<rect x="965" y="261" width="1" height="4" fill="#000"/>
<rect x="969" y="236" width="1" height="6" fill="#00ff00"/>
<rect x="969" y="262" width="1" height="2" fill="#00ff00"/>
<rect x="968" y="242" width="3" height="20" fill="#00ff00"/>
<rect x="969" y="243" width="1" height="18" fill="#000"/>
<rect x="973" y="232" width="1" height="10" fill="#ff0000"/>
<rect x="973" y="252" width="1" height="3" fill="#ff0000"/>
<rect x="972" y="242" width="3" height="10" fill="#ff0000"/>
<rect x="977" y="233" width="1" height="17" fill="#ff0000"/>
<rect x="976" y="250" width="3" height="11" fill="#ff0000"/>
<rect x="981" y="253" width="1" height="5" fill="#ff0000"/>
<rect x="981" y="279" width="1" height="1" fill="#ff0000"/>
<rect x="980" y="258" width="3" height="21" fill="#ff0000"/>
<rect x="985" y="251" width="1" height="12" fill="#00ff00"/>
<rect x="985" y="279" width="1" height="5" fill="#00ff00"/>
<rect x="984" y="263" width="3" height="16" fill="#00ff00"/>
<rect x="985" y="264" width="1" height="14" fill="#000"/>
<rect x="989" y="247" width="1" height="7" fill="#00ff00"/>
<rect x="989" y="264" width="1" height="1" fill="#00ff00"/>
<rect x="988" y="254" width="3" height="10" fill="#00ff00"/>
<rect x="989" y="255" width="1" height="8" fill="#000"/>
<rect x="993" y="244" width="1" height="7" fill="#00ff00"/>
<rect x="993" y="255" width="1" height="10" fill="#00ff00"/>
<rect x="992" y="251" width="3" height="4" fill="#00ff00"/>
<rect x="993" y="252" width="1" height="2" fill="#000"/>
<rect x="997" y="222" width="1" height="3" fill="#00ff00"/>
<rect x="997" y="253" width="1" height="4" fill="#00ff00"/>
<rect x="996" y="225" width="3" height="28" fill="#00ff00"/>
<rect x="997" y="226" width="1" height="26" fill="#000"/>
<rect x="1001" y="215" width="1" height="10" fill="#ff0000"/>
<rect x="1001" y="231" width="1" height="5" fill="#ff0000"/>
<rect x="1000" y="225" width="3" height="6" fill="#ff0000"/>
<rect x="1005" y="216" width="1" height="4" fill="#00ff00"/>
<rect x="1005" y="231" width="1" height="3" fill="#00ff00"/>
<rect x="1004" y="220" width="3" height="11" fill="#00ff00"/>
<rect x="1005" y="221" width="1" height="9" fill="#000"/>
<rect x="1009" y="207" width="1" height="5" fill="#00ff00"/>
<rect x="1009" y="221" width="1" height="6" fill="#00ff00"/>
<rect x="1008" y="212" width="3" height="9" fill="#00ff00"/>
<rect x="1009" y="213" width="1" height="7" fill="#000"/>
<rect x="1013" y="192" width="1" height="6" fill="#00ff00"/>
<rect x="1013" y="214" width="1" height="1" fill="#00ff00"/>
<rect x="1012" y="198" width="3" height="16" fill="#00ff00"/>
<rect x="1013" y="199" width="1" height="14" fill="#000"/>
<rect x="1017" y="177" width="1" height="7" fill="#00ff00"/>
<rect x="1017" y="200" width="1" height="2" fill="#00ff00"/>
<rect x="1016" y="184" width="3" height="16" fill="#00ff00"/>
<rect x="1017" y="185" width="1" height="14" fill="#000"/>
<rect x="1021" y="176" width="1" height="8" fill="#ff0000"/>
<rect x="1021" y="191" width="1" height="3" fill="#ff0000"/>
<rect x="1020" y="184" width="3" height="7" fill="#ff0000"/>
<rect x="1025" y="185" width="1" height="4" fill="#ff0000"/>
<rect x="1025" y="194" width="1" height="2" fill="#ff0000"/>
<rect x="1024" y="189" width="3" height="5" fill="#ff0000"/>
<rect x="1029" y="198" width="1" height="10" fill="#ff0000"/>
<rect x="1028" y="191" width="3" height="7" fill="#ff0000"/>
<rect x="1033" y="195" width="1" height="2" fill="#ff0000"/>
<rect x="1033" y="204" width="1" height="2" fill="#ff0000"/>
<rect x="1032" y="197" width="3" height="7" fill="#ff0000"/>
<rect x="1037" y="201" width="1" height="1" fill="#ff0000"/>
<rect x="1037" y="224" width="1" height="5" fill="#ff0000"/>
<rect x="1036" y="202" width="3" height="22" fill="#ff0000"/>
<rect x="1041" y="215" width="1" height="6" fill="#00ff00"/>
<rect x="1041" y="224" width="1" height="17" fill="#00ff00"/>
<rect x="1040" y="221" width="3" height="3" fill="#00ff00"/>
<rect x="1041" y="222" width="1" height="1" fill="#000"/>
<rect x="1045" y="188" width="1" height="3" fill="#00ff00"/>
<rect x="1045" y="222" width="1" height="1" fill="#00ff00"/>
<rect x="1044" y="191" width="3" height="31" fill="#00ff00"/>
<rect x="1045" y="192" width="1" height="29" fill="#000"/>
<rect x="1049" y="186" width="1" height="1" fill="#00ff00"/>
<rect x="1049" y="193" width="1" height="5" fill="#00ff00"/>
<rect x="1048" y="187" width="3" height="6" fill="#00ff00"/>
<rect x="1049" y="188" width="1" height="4" fill="#000"/>
<rect x="1053" y="176" width="1" height="1" fill="#00ff00"/>
<rect x="1053" y="202" width="1" height="1" fill="#00ff00"/>
<rect x="1052" y="177" width="3" height="25" fill="#00ff00"/>
<rect x="1053" y="178" width="1" height="23" fill="#000"/>
<rect x="1057" y="172" width="1" height="4" fill="#00ff00"/>
<rect x="1057" y="180" width="1" height="3" fill="#00ff00"/>
<rect x="1056" y="176" width="3" height="4" fill="#00ff00"/>
<rect x="1057" y="177" width="1" height="2" fill="#000"/>
<rect x="1061" y="165" width="1" height="3" fill="#00ff00"/>
<rect x="1061" y="177" width="1" height="7" fill="#00ff00"/>
<rect x="1060" y="168" width="3" height="9" fill="#00ff00"/>
<rect x="1061" y="169" width="1" height="7" fill="#000"/>
<rect x="1065" y="156" width="1" height="12" fill="#ff0000"/>
<rect x="1064" y="168" width="3" height="9" fill="#ff0000"/>
<rect x="1069" y="166" width="1" height="10" fill="#ff0000"/>
<rect x="1069" y="193" width="1" height="5" fill="#ff0000"/>
<rect x="1068" y="176" width="3" height="17" fill="#ff0000"/>
<rect x="1073" y="188" width="1" height="3" fill="#ff0000"/>
<rect x="1073" y="195" width="1" height="2" fill="#ff0000"/>
<rect x="1072" y="191" width="3" height="4" fill="#ff0000"/>
<rect x="1077" y="180" width="1" height="3" fill="#00ff00"/>
<rect x="1077" y="194" width="1" height="1" fill="#00ff00"/>
<rect x="1076" y="183" width="3" height="11" fill="#00ff00"/>
<rect x="1077" y="184" width="1" height="9" fill="#000"/>
<rect x="1081" y="174" width="1" height="4" fill="#00ff00"/>
<rect x="1081" y="185" width="1" height="3" fill="#00ff00"/>
<rect x="1080" y="178" width="3" height="7" fill="#00ff00"/>
<rect x="1081" y="179" width="1" height="5" fill="#000"/>
<rect x="1085" y="167" width="1" height="4" fill="#00ff00"/>
<rect x="1085" y="179" width="1" height="3" fill="#00ff00"/>
<rect x="1084" y="171" width="3" height="8" fill="#00ff00"/>
<rect x="1085" y="172" width="1" height="6" fill="#000"/>
<rect x="1089" y="169" width="1" height="2" fill="#ff0000"/>
<rect x="1089" y="214" width="1" height="4" fill="#ff0000"/>
<rect x="1088" y="171" width="3" height="43" fill="#ff0000"/>
<rect x="1093" y="189" width="1" height="21" fill="#00ff00"/>
<rect x="1093" y="214" width="1" height="5" fill="#00ff00"/>
<rect x="1092" y="210" width="3" height="4" fill="#00ff00"/>
<rect x="1093" y="211" width="1" height="2" fill="#000"/>
<rect x="1097" y="203" width="1" height="8" fill="#ff0000"/>
<rect x="1097" y="223" width="1" height="22" fill="#ff0000"/>
<rect x="1096" y="211" width="3" height="12" fill="#ff0000"/>
<rect x="1101" y="210" width="1" height="3" fill="#00ff00"/>
<rect x="1101" y="222" width="1" height="18" fill="#00ff00"/>
<rect x="1100" y="213" width="3" height="9" fill="#00ff00"/>
<rect x="1101" y="214" width="1" height="7" fill="#000"/>
<rect x="1105" y="220" width="1" height="2" fill="#ff0000"/>
<rect x="1104" y="213" width="3" height="7" fill="#ff0000"/>
<rect x="1109" y="217" width="1" height="1" fill="#ff0000"/>
<rect x="1109" y="256" width="1" height="14" fill="#ff0000"/>
<rect x="1108" y="218" width="3" height="38" fill="#ff0000"/>
<rect x="1113" y="250" width="1" height="5" fill="#ff0000"/>
<rect x="1113" y="269" width="1" height="12" fill="#ff0000"/>
<rect x="1112" y="255" width="3" height="14" fill="#ff0000"/>
<rect x="1117" y="252" width="1" height="5" fill="#00ff00"/>
<rect x="1117" y="268" width="1" height="3" fill="#00ff00"/>
<rect x="1116" y="257" width="3" height="11" fill="#00ff00"/>
<rect x="1117" y="258" width="1" height="9" fill="#000"/>
<rect x="1121" y="239" width="1" height="11" fill="#00ff00"/>
<rect x="1121" y="258" width="1" height="4" fill="#00ff00"/>
<rect x="1120" y="250" width="3" height="8" fill="#00ff00"/>
<rect x="1121" y="251" width="1" height="6" fill="#000"/>
<rect x="1125" y="242" width="1" height="8" fill="#ff0000"/>
<rect x="1125" y="255" width="1" height="1" fill="#ff0000"/>
<rect x="1124" y="250" width="3" height="5" fill="#ff0000"/>
<rect x="1129" y="248" width="1" height="4" fill="#00ff00"/>
<rect x="1129" y="255" width="1" height="6" fill="#00ff00"/>
<rect x="1128" y="252" width="3" height="3" fill="#00ff00"/>
<rect x="1129" y="253" width="1" height="1" fill="#000"/>
<rect x="1133" y="248" width="1" height="3" fill="#ff0000"/>
<rect x="1133" y="278" width="1" height="11" fill="#ff0000"/>
<rect x="1132" y="251" width="3" height="27" fill="#ff0000"/>
<rect x="1137" y="271" width="1" height="5" fill="#ff0000"/>
<rect x="1137" y="296" width="1" height="1" fill="#ff0000"/>
<rect x="1136" y="276" width="3" height="20" fill="#ff0000"/>
<rect x="1141" y="278" width="1" height="15" fill="#00ff00"/>
<rect x="1141" y="295" width="1" height="5" fill="#00ff00"/>
<rect x="1140" y="293" width="3" height="2" fill="#00ff00"/>
<rect x="1145" y="308" width="1" height="8" fill="#ff0000"/>
<rect x="1144" y="294" width="3" height="14" fill="#ff0000"/>
<rect x="1149" y="294" width="1" height="4" fill="#00ff00"/>
<rect x="1149" y="308" width="1" height="7" fill="#00ff00"/>
<rect x="1148" y="298" width="3" height="10" fill="#00ff00"/>
<rect x="1149" y="299" width="1" height="8" fill="#000"/>
<rect x="1153" y="294" width="1" height="4" fill="#ff0000"/>
<rect x="1153" y="314" width="1" height="12" fill="#ff0000"/>
<rect x="1152" y="298" width="3" height="16" fill="#ff0000"/>
<rect x="1157" y="299" width="1" height="7" fill="#00ff00"/>
<rect x="1157" y="314" width="1" height="6" fill="#00ff00"/>
<rect x="1156" y="306" width="3" height="8" fill="#00ff00"/>
<rect x="1157" y="307" width="1" height="6" fill="#000"/>
<rect x="1161" y="290" width="1" height="16" fill="#ff0000"/>
<rect x="1161" y="315" width="1" height="4" fill="#ff0000"/>
<rect x="1160" y="306" width="3" height="9" fill="#ff0000"/>
<rect x="1165" y="291" width="1" height="6" fill="#00ff00"/>
<rect x="1165" y="314" width="1" height="3" fill="#00ff00"/>
<rect x="1164" y="297" width="3" height="17" fill="#00ff00"/>
<rect x="1165" y="298" width="1" height="15" fill="#000"/>
<rect x="1169" y="295" width="1" height="2" fill="#ff0000"/>
<rect x="1169" y="303" width="1" height="5" fill="#ff0000"/>
<rect x="1168" y="297" width="3" height="6" fill="#ff0000"/>
<rect x="1173" y="301" width="1" height="14" fill="#ff0000"/>
<rect x="1173" y="332" width="1" height="7" fill="#ff0000"/>
<rect x="1172" y="315" width="3" height="17" fill="#ff0000"/>
<rect x="1177" y="321" width="1" height="8" fill="#ff0000"/>
<rect x="1177" y="335" width="1" height="5" fill="#ff0000"/>
<rect x="1176" y="329" width="3" height="6" fill="#ff0000"/>
<rect x="1181" y="321" width="1" height="11" fill="#ff0000"/>
<rect x="1181" y="335" width="1" height="4" fill="#ff0000"/>
<rect x="1180" y="332" width="3" height="3" fill="#ff0000"/>
<rect x="1185" y="314" width="1" height="3" fill="#00ff00"/>
<rect x="1185" y="335" width="1" height="5" fill="#00ff00"/>
<rect x="1184" y="317" width="3" height="18" fill="#00ff00"/>
<rect x="1185" y="318" width="1" height="16" fill="#000"/>
<rect x="1189" y="315" width="1" height="2" fill="#ff0000"/>
<rect x="1189" y="323" width="1" height="8" fill="#ff0000"/>
<rect x="1188" y="317" width="3" height="6" fill="#ff0000"/>
<rect x="1193" y="319" width="1" height="2" fill="#ff0000"/>
<rect x="1193" y="334" width="1" height="2" fill="#ff0000"/>
<rect x="1192" y="321" width="3" height="13" fill="#ff0000"/>
<rect x="1197" y="319" width="1" height="14" fill="#ff0000"/>
<rect x="1197" y="339" width="1" height="1" fill="#ff0000"/>
<rect x="1196" y="333" width="3" height="6" fill="#ff0000"/>
<rect x="1201" y="332" width="1" height="5" fill="#00ff00"/>
<rect x="1201" y="339" width="1" height="13" fill="#00ff00"/>
<rect x="1200" y="337" width="3" height="2" fill="#00ff00"/>
<rect x="1205" y="325" width="1" height="4" fill="#00ff00"/>
<rect x="1205" y="338" width="1" height="11" fill="#00ff00"/>
<rect x="1204" y="329" width="3" height="9" fill="#00ff00"/>
<rect x="1205" y="330" width="1" height="7" fill="#000"/>
<rect x="1209" y="328" width="1" height="1" fill="#ff0000"/>
<rect x="1209" y="334" width="1" height="4" fill="#ff0000"/>
<rect x="1208" y="329" width="3" height="5" fill="#ff0000"/>
<rect x="1213" y="306" width="1" height="7" fill="#00ff00"/>
<rect x="1212" y="313" width="3" height="21" fill="#00ff00"/>
<rect x="1213" y="314" width="1" height="19" fill="#000"/>
<rect x="1217" y="312" width="1" height="1" fill="#ff0000"/>
<rect x="1217" y="317" width="1" height="8" fill="#ff0000"/>
<rect x="1216" y="313" width="3" height="4" fill="#ff0000"/>
<rect x="1221" y="303" width="1" height="3" fill="#00ff00"/>
<rect x="1221" y="317" width="1" height="3" fill="#00ff00"/>
<rect x="1220" y="306" width="3" height="11" fill="#00ff00"/>
<rect x="1221" y="307" width="1" height="9" fill="#000"/>
<rect x="1225" y="300" width="1" height="6" fill="#ff0000"/>
<rect x="1224" y="306" width="3" height="7" fill="#ff0000"/>
<rect x="1229" y="298" width="1" height="8" fill="#00ff00"/>
<rect x="1229" y="313" width="1" height="3" fill="#00ff00"/>
<rect x="1228" y="306" width="3" height="7" fill="#00ff00"/>
<rect x="1229" y="307" width="1" height="5" fill="#000"/>
<rect x="1233" y="305" width="1" height="1" fill="#ff0000"/>
<rect x="1233" y="316" width="1" height="8" fill="#ff0000"/>
<rect x="1232" y="306" width="3" height="10" fill="#ff0000"/>
<rect x="1237" y="309" width="1" height="5" fill="#ff0000"/>
<rect x="1237" y="327" width="1" height="10" fill="#ff0000"/>
<rect x="1236" y="314" width="3" height="13" fill="#ff0000"/>
<rect x="1241" y="296" width="1" height="10" fill="#00ff00"/>
<rect x="1241" y="327" width="1" height="10" fill="#00ff00"/>
<rect x="1240" y="306" width="3" height="21" fill="#00ff00"/>
<rect x="1241" y="307" width="1" height="19" fill="#000"/>
<rect x="1245" y="298" width="1" height="8" fill="#ff0000"/>
<rect x="1245" y="313" width="1" height="4" fill="#ff0000"/>
<rect x="1244" y="306" width="3" height="7" fill="#ff0000"/>
<rect x="1249" y="302" width="1" height="8" fill="#00ff00"/>
<rect x="1249" y="312" width="1" height="3" fill="#00ff00"/>
<rect x="1248" y="310" width="3" height="2" fill="#00ff00"/>
<rect x="1253" y="309" width="1" height="1" fill="#ff0000"/>
<rect x="1253" y="329" width="1" height="2" fill="#ff0000"/>
<rect x="1252" y="310" width="3" height="19" fill="#ff0000"/>
<rect x="1257" y="313" width="1" height="8" fill="#00ff00"/>
<rect x="1257" y="329" width="1" height="2" fill="#00ff00"/>
<rect x="1256" y="321" width="3" height="8" fill="#00ff00"/>
<rect x="1257" y="322" width="1" height="6" fill="#000"/>
<rect x="1261" y="317" width="1" height="4" fill="#ff0000"/>
<rect x="1261" y="332" width="1" height="3" fill="#ff0000"/>
<rect x="1260" y="321" width="3" height="11" fill="#ff0000"/>
<rect x="1265" y="324" width="1" height="6" fill="#ff0000"/>
<rect x="1265" y="336" width="1" height="1" fill="#ff0000"/>
<rect x="1264" y="330" width="3" height="6" fill="#ff0000"/>
<rect x="1269" y="332" width="1" height="2" fill="#ff0000"/>
<rect x="1269" y="345" width="1" height="2" fill="#ff0000"/>
<rect x="1268" y="334" width="3" height="11" fill="#ff0000"/>
<rect x="1273" y="350" width="1" height="5" fill="#ff0000"/>
<rect x="1272" y="343" width="3" height="7" fill="#ff0000"/>
<rect x="1277" y="340" width="1" height="5" fill="#00ff00"/>
<rect x="1277" y="348" width="1" height="11" fill="#00ff00"/>
<rect x="1276" y="345" width="3" height="3" fill="#00ff00"/>
<rect x="1277" y="346" width="1" height="1" fill="#000"/>
<rect x="1281" y="339" width="1" height="6" fill="#ff0000"/>
<rect x="1281" y="353" width="1" height="4" fill="#ff0000"/>
<rect x="1280" y="345" width="3" height="8" fill="#ff0000"/>
<rect x="1285" y="337" width="1" height="14" fill="#ff0000"/>
<rect x="1284" y="351" width="3" height="7" fill="#ff0000"/>
<rect x="1289" y="344" width="1" height="6" fill="#00ff00"/>
<rect x="1289" y="358" width="1" height="4" fill="#00ff00"/>
<rect x="1288" y="350" width="3" height="8" fill="#00ff00"/>
<rect x="1289" y="351" width="1" height="6" fill="#000"/>
<rect x="1293" y="343" width="1" height="3" fill="#00ff00"/>
<rect x="1293" y="354" width="1" height="8" fill="#00ff00"/>
<rect x="1292" y="346" width="3" height="8" fill="#00ff00"/>
<rect x="1293" y="347" width="1" height="6" fill="#000"/>
<rect x="1297" y="340" width="1" height="5" fill="#00ff00"/>
<rect x="1297" y="348" width="1" height="3" fill="#00ff00"/>
<rect x="1296" y="345" width="3" height="3" fill="#00ff00"/>
<rect x="1297" y="346" width="1" height="1" fill="#000"/>
<rect x="1301" y="329" width="1" height="5" fill="#00ff00"/>
<rect x="1301" y="346" width="1" height="3" fill="#00ff00"/>
<rect x="1300" y="334" width="3" height="12" fill="#00ff00"/>
<rect x="1301" y="335" width="1" height="10" fill="#000"/>
<rect x="1305" y="337" width="1" height="9" fill="#ff0000"/>
<rect x="1304" y="333" width="3" height="4" fill="#ff0000"/>
<rect x="1309" y="327" width="1" height="1" fill="#00ff00"/>
<rect x="1309" y="337" width="1" height="3" fill="#00ff00"/>
<rect x="1308" y="328" width="3" height="9" fill="#00ff00"/>
<rect x="1309" y="329" width="1" height="7" fill="#000"/></g>
<g shape-rendering="crispEdges">
<polyline points="5.5,132.3 9.5,133.0 13.5,133.6 17.5,134.2 21.5,134.8 25.5,135.4 29.5,136.0 33.5,136.5 37.5,136.8 41.5,137.0 45.5,137.2 49.5,137.2 53.5,137.3 57.5,137.4 61.5,137.4 65.5,137.5 69.5,137.5 73.5,137.6 77.5,137.6 81.5,137.7 85.5,137.7 89.5,137.8 93.5,138.0 97.5,138.2 101.5,138.4 105.5,138.7 109.5,139.0 113.5,139.3 117.5,139.7 121.5,140.0 125.5,140.4 129.5,140.8 133.5,141.1 137.5,141.3 141.5,141.3 145.5,141.3 149.5,141.5 153.5,143.3 157.5,145.5 161.5,147.0 165.5,148.4 169.5,149.7 173.5,151.0 177.5,152.4 181.5,153.7 185.5,154.9 189.5,156.3 193.5,157.7 197.5,159.2 201.5,161.0 205.5,162.8 209.5,164.7 213.5,166.5 217.5,168.3 221.5,170.1 225.5,171.9 229.5,173.7 233.5,175.6 237.5,177.5 241.5,179.5 245.5,181.5 249.5,183.6 253.5,185.7 257.5,187.9 261.5,190.2 265.5,192.4 269.5,194.6 273.5,196.7 277.5,198.9 281.5,201.0 285.5,203.0 289.5,205.0 293.5,207.0 297.5,209.0 301.5,211.0 305.5,212.9 309.5,214.7 313.5,216.3 317.5,217.7 321.5,218.7 325.5,219.6 329.5,220.4 333.5,221.0 337.5,221.7 341.5,222.4 345.5,223.3 349.5,224.3 353.5,225.4 357.5,226.6 361.5,227.6 365.5,228.5 369.5,229.1 373.5,229.4 377.5,229.7 381.5,229.9 385.5,230.1 389.5,230.1 393.5,230.1 397.5,230.1 401.5,230.1 405.5,230.1 409.5,230.1 413.5,230.1 417.5,230.3 421.5,230.6 425.5,231.0 429.5,231.3 433.5,231.7 437.5,232.2 441.5,232.8 445.5,233.3 449.5,233.8 453.5,234.3 457.5,234.8 461.5,235.4 465.5,235.9 469.5,236.2 473.5,236.5 477.5,236.5 481.5,236.5 485.5,236.5 489.5,236.5 493.5,236.5 497.5,236.5 501.5,236.5 505.5,236.5 509.5,236.5 513.5,236.6 517.5,236.6 521.5,236.7 525.5,236.8 529.5,237.0 533.5,237.1 537.5,237.3 541.5,237.5 545.5,238.0 549.5,238.7 553.5,239.4 557.5,240.0 561.5,240.4 565.5,240.7 569.5,241.0 573.5,241.3 577.5,241.7 581.5,242.2 585.5,242.8 589.5,243.5 593.5,244.4 597.5,245.3 601.5,246.2 605.5,247.2 609.5,248.2 613.5,249.4 617.5,250.6 621.5,251.9 625.5,253.2 629.5,254.4 633.5,255.5 637.5,256.7 641.5,257.8 645.5,259.0 649.5,260.1 653.5,261.2 657.5,262.1 661.5,262.9 665.5,263.6 669.5,264.3 673.5,264.9 677.5,265.4 681.5,266.0 685.5,266.6 689.5,267.2 693.5,267.9 697.5,268.6 701.5,269.3 705.5,270.1 709.5,270.9 713.5,271.7 717.5,272.5 721.5,273.3 725.5,274.2 729.5,275.0 733.5,275.9 737.5,276.7 741.5,277.4 745.5,278.1 749.5,278.9 753.5,279.6 757.5,280.4 761.5,281.3 765.5,282.4 769.5,283.8 773.5,285.3 777.5,286.8 781.5,288.2 785.5,289.4 789.5,290.5 793.5,291.4 797.5,291.9 801.5,292.2 805.5,292.5 809.5,292.8 813.5,293.2 817.5,293.6 821.5,293.9 825.5,294.3 829.5,294.7 833.5,295.1 837.5,295.5 841.5,295.9 845.5,296.4 849.5,296.8 853.5,297.3 857.5,297.7 861.5,298.1 865.5,298.4 869.5,298.7 873.5,298.9 877.5,299.1 881.5,299.3 885.5,299.5 889.5,299.7 893.5,299.8 897.5,300.0 901.5,300.1 905.5,300.1 909.5,300.2 913.5,300.2 917.5,300.0 921.5,299.7 925.5,299.5 929.5,299.2 933.5,299.1 937.5,299.0 941.5,298.8 945.5,298.7 949.5,298.6 953.5,298.3 957.5,297.7 961.5,297.1 965.5,296.5 969.5,296.0 973.5,295.7 977.5,295.4 981.5,295.1 985.5,294.9 989.5,294.6 993.5,294.3 997.5,293.8 1001.5,293.2 1005.5,292.5 1009.5,291.7 1013.5,290.8 1017.5,289.8 1021.5,288.9 1025.5,288.0 1029.5,287.1 1033.5,286.2 1037.5,285.3 1041.5,284.3 1045.5,283.4 1049.5,282.4 1053.5,281.4 1057.5,280.4 1061.5,279.4 1065.5,278.4 1069.5,277.4 1073.5,276.4 1077.5,275.4 1081.5,274.6 1085.5,273.9 1089.5,273.2 1093.5,272.6 1097.5,272.1 1101.5,271.7 1105.5,271.4 1109.5,271.0 1113.5,270.7 1117.5,270.4 1121.5,270.3 1125.5,270.2 1129.5,270.2 1133.5,270.3 1137.5,270.4 1141.5,270.5 1145.5,270.7 1149.5,270.9 1153.5,271.1 1157.5,271.4 1161.5,271.7 1165.5,272.1 1169.5,272.5 1173.5,273.0 1177.5,273.5 1181.5,274.0 1185.5,274.5 1189.5,275.1 1193.5,275.7 1197.5,276.3 1201.5,276.8 1205.5,277.4 1209.5,277.8 1213.5,278.3 1217.5,278.6 1221.5,279.0 1225.5,279.4 1229.5,279.8 1233.5,280.3 1237.5,280.7 1241.5,281.2 1245.5,281.6 1249.5,282.0 1253.5,282.4 1257.5,282.7 1261.5,283.1 1265.5,283.6 1269.5,284.0 1273.5,284.4 1277.5,284.9 1281.5,285.4 1285.5,285.9 1289.5,286.6 1293.5,287.2 1297.5,287.9 1301.5,288.4 1305.5,288.9 1309.5,289.3" fill="none" stroke="#ff0000" stroke-width="1"/>
<polyline points="5.5,157.2 9.5,157.7 13.5,158.1 17.5,158.6 21.5,159.1 25.5,159.8 29.5,160.6 33.5,161.1 37.5,161.3 41.5,161.3 45.5,161.3 49.5,161.3 53.5,161.3 57.5,161.3 61.5,161.2 65.5,160.6 69.5,159.8 73.5,159.2 77.5,158.9 81.5,158.8 85.5,158.7 89.5,158.6 93.5,158.5 97.5,158.5 101.5,158.4 105.5,158.4 109.5,158.5 113.5,158.6 117.5,158.8 121.5,159.0 125.5,159.0 129.5,159.1 133.5,159.1 137.5,159.1 141.5,159.3 145.5,160.0 149.5,161.7 153.5,164.6 157.5,167.6 161.5,169.7 165.5,171.5 169.5,173.2 173.5,174.9 177.5,176.7 181.5,178.8 185.5,180.9 189.5,183.2 193.5,185.5 197.5,187.9 201.5,190.4 205.5,193.0 209.5,195.7 213.5,198.5 217.5,201.3 221.5,204.3 225.5,207.3 229.5,210.4 233.5,213.5 237.5,216.5 241.5,219.6 245.5,222.9 249.5,226.2 253.5,230.0 257.5,234.2 261.5,238.6 265.5,242.7 269.5,246.3 273.5,249.2 277.5,251.8 281.5,254.1 285.5,256.4 289.5,258.9 293.5,261.8 297.5,264.8 301.5,268.0 305.5,270.9 309.5,273.6 313.5,275.6 317.5,277.0 321.5,278.0 325.5,278.8 329.5,279.5 333.5,280.2 337.5,280.8 341.5,281.4 345.5,282.1 349.5,282.6 353.5,283.1 357.5,283.4 361.5,283.5 365.5,283.5 369.5,283.5 373.5,283.5 377.5,283.5 381.5,283.5 385.5,283.4 389.5,283.1 393.5,282.4 397.5,281.5 401.5,280.5 405.5,279.5 409.5,278.6 413.5,277.8 417.5,276.8 421.5,275.9 425.5,275.1 429.5,274.7 433.5,274.8 437.5,275.0 441.5,275.3 445.5,275.5 449.5,275.6 453.5,275.5 457.5,275.3 461.5,275.1 465.5,274.8 469.5,274.5 473.5,273.9 477.5,273.3 481.5,272.6 485.5,272.0 489.5,271.3 493.5,270.7 497.5,270.1 501.5,269.5 505.5,269.0 509.5,268.5 513.5,267.9 517.5,267.4 521.5,267.0 525.5,266.7 529.5,266.5 533.5,266.5 537.5,266.7 541.5,266.9 545.5,267.2 549.5,267.4 553.5,267.7 557.5,267.9 561.5,268.2 565.5,268.5 569.5,268.8 573.5,269.2 577.5,269.7 581.5,270.4 585.5,271.1 589.5,271.9 593.5,272.8 597.5,273.8 601.5,275.3 605.5,277.1 609.5,279.2 613.5,281.1 617.5,282.9 621.5,284.5 625.5,286.1 629.5,287.7 633.5,289.2 637.5,290.7 641.5,292.2 645.5,293.6 649.5,295.0 653.5,296.2 657.5,297.3 661.5,298.4 665.5,299.4 669.5,300.1 673.5,300.7 677.5,301.1 681.5,301.4 685.5,301.8 689.5,302.3 693.5,303.0 697.5,304.1 701.5,305.3 705.5,306.6 709.5,307.6 713.5,308.4 717.5,309.2 721.5,309.9 725.5,310.7 729.5,311.5 733.5,312.3 737.5,313.1 741.5,313.9 745.5,314.8 749.5,315.7 753.5,316.6 757.5,317.6 761.5,318.7 765.5,319.8 769.5,321.1 773.5,322.5 777.5,323.9 781.5,325.6 785.5,327.8 789.5,330.2 793.5,331.2 797.5,331.4 801.5,331.5 805.5,331.6 809.5,331.6 813.5,331.6 817.5,331.6 821.5,331.6 825.5,331.6 829.5,331.6 833.5,331.6 837.5,331.7 841.5,331.7 845.5,331.8 849.5,331.9 853.5,332.0 857.5,332.0 861.5,332.0 865.5,331.9 869.5,331.9 873.5,331.8 877.5,331.7 881.5,331.6 885.5,331.4 889.5,331.3 893.5,331.1 897.5,330.7 901.5,330.2 905.5,329.4 909.5,328.7 913.5,328.1 917.5,327.6 921.5,327.0 925.5,326.4 929.5,325.8 933.5,324.9 937.5,323.9 941.5,322.8 945.5,321.7 949.5,320.8 953.5,319.9 957.5,319.1 961.5,318.2 965.5,317.2 969.5,316.3 973.5,315.3 977.5,314.3 981.5,313.2 985.5,312.1 989.5,310.9 993.5,309.6 997.5,308.2 1001.5,306.7 1005.5,305.0 1009.5,303.3 1013.5,301.6 1017.5,299.7 1021.5,297.7 1025.5,295.7 1029.5,293.6 1033.5,291.6 1037.5,289.6 1041.5,287.7 1045.5,285.7 1049.5,283.7 1053.5,281.5 1057.5,279.2 1061.5,276.9 1065.5,274.7 1069.5,272.8 1073.5,271.0 1077.5,269.4 1081.5,268.1 1085.5,266.9 1089.5,265.8 1093.5,264.9 1097.5,264.0 1101.5,263.3 1105.5,262.5 1109.5,261.9 1113.5,261.7 1117.5,261.7 1121.5,261.7 1125.5,261.7 1129.5,261.7 1133.5,261.7 1137.5,261.7 1141.5,261.8 1145.5,262.3 1149.5,263.1 1153.5,263.8 1157.5,264.6 1161.5,265.4 1165.5,266.4 1169.5,267.4 1173.5,268.4 1177.5,269.5 1181.5,270.6 1185.5,271.8 1189.5,272.9 1193.5,273.9 1197.5,274.9 1201.5,275.9 1205.5,276.9 1209.5,277.9 1213.5,278.9 1217.5,280.0 1221.5,281.0 1225.5,281.8 1229.5,282.5 1233.5,283.1 1237.5,283.7 1241.5,284.3 1245.5,285.0 1249.5,285.6 1253.5,286.3 1257.5,287.0 1261.5,287.7 1265.5,288.5 1269.5,289.4 1273.5,290.3 1277.5,291.3 1281.5,292.3 1285.5,293.2 1289.5,294.0 1293.5,294.9 1297.5,295.9 1301.5,297.0 1305.5,298.3 1309.5,299.5" fill="none" stroke="#9932cc" stroke-width="1"/>
<polyline points="5.5,189.5 9.5,189.4 13.5,189.1 17.5,188.3 21.5,187.5 25.5,187.3 29.5,187.1 33.5,187.0 37.5,186.9 41.5,186.8 45.5,186.6 49.5,185.9 53.5,184.6 57.5,183.0 61.5,181.3 65.5,179.5 69.5,177.5 73.5,175.4 77.5,173.5 81.5,172.1 85.5,171.3 89.5,170.5 93.5,169.9 97.5,169.5 101.5,169.2 105.5,169.1 109.5,168.9 113.5,168.8 117.5,168.6 121.5,168.5 125.5,168.4 129.5,168.4 133.5,168.3 137.5,168.3 141.5,168.4 145.5,170.3 149.5,173.6 153.5,179.2 157.5,182.9 161.5,185.4 165.5,188.6 169.5,193.0 173.5,197.6 177.5,201.6 181.5,205.1 185.5,208.5 189.5,212.0 193.5,216.0 197.5,220.6 201.5,225.4 205.5,229.8 209.5,233.4 213.5,236.3 217.5,239.2 221.5,242.7 225.5,246.7 229.5,250.7 233.5,254.5 237.5,258.3 241.5,262.4 245.5,267.2 249.5,272.9 253.5,278.9 257.5,284.9 261.5,291.3 265.5,296.9 269.5,301.5 273.5,305.7 277.5,309.5 281.5,312.8 285.5,315.8 289.5,318.4 293.5,320.9 297.5,323.3 301.5,325.7 305.5,328.6 309.5,331.6 313.5,333.9 317.5,335.2 321.5,335.2 325.5,334.6 329.5,333.9 333.5,332.7 337.5,331.2 341.5,329.7 345.5,328.5 349.5,327.8 353.5,327.2 357.5,326.5 361.5,325.8 365.5,325.0 369.5,324.0 373.5,322.9 377.5,321.2 381.5,318.9 385.5,316.3 389.5,313.7 393.5,310.7 397.5,307.6 401.5,304.5 405.5,301.6 409.5,298.5 413.5,295.6 417.5,293.4 421.5,292.0 425.5,291.0 429.5,290.3 433.5,290.0 437.5,289.8 441.5,289.7 445.5,289.5 449.5,289.2 453.5,288.5 457.5,287.6 461.5,286.6 465.5,285.4 469.5,284.2 473.5,282.9 477.5,281.5 481.5,279.8 485.5,278.0 489.5,276.3 493.5,274.9 497.5,273.9 501.5,273.1 505.5,272.4 509.5,271.7 513.5,270.9 517.5,269.7 521.5,268.3 525.5,267.2 529.5,266.5 533.5,266.5 537.5,266.5 541.5,266.5 545.5,266.5 549.5,266.8 553.5,268.0 557.5,269.5 561.5,270.2 565.5,270.4 569.5,270.6 573.5,270.9 577.5,271.4 581.5,272.5 585.5,274.0 589.5,275.7 593.5,277.5 597.5,279.2 601.5,281.3 605.5,284.3 609.5,288.2 613.5,292.2 617.5,295.9 621.5,299.4 625.5,302.5 629.5,304.9 633.5,307.1 637.5,309.0 641.5,310.7 645.5,312.3 649.5,313.9 653.5,315.3 657.5,316.6 661.5,317.7 665.5,318.7 669.5,319.6 673.5,320.2 677.5,320.4 681.5,320.6 685.5,320.7 689.5,320.9 693.5,321.5 697.5,322.6 701.5,324.0 705.5,325.5 709.5,326.7 713.5,327.8 717.5,328.8 721.5,329.8 725.5,330.8 729.5,331.6 733.5,332.4 737.5,333.1 741.5,333.9 745.5,334.8 749.5,335.9 753.5,337.2 757.5,338.7 761.5,340.3 765.5,342.1 769.5,344.4 773.5,347.0 777.5,349.6 781.5,351.9 785.5,354.3 789.5,356.4 793.5,357.1 797.5,356.7 801.5,356.1 805.5,355.2 809.5,353.9 813.5,352.6 817.5,351.5 821.5,350.8 825.5,350.4 829.5,350.0 833.5,349.7 837.5,349.4 841.5,348.9 845.5,348.3 849.5,347.5 853.5,346.6 857.5,345.8 861.5,345.1 865.5,344.6 869.5,344.1 873.5,343.4 877.5,342.6 881.5,341.7 885.5,340.6 889.5,339.5 893.5,338.4 897.5,337.2 901.5,335.9 905.5,334.7 909.5,333.5 913.5,332.4 917.5,331.2 921.5,329.9 925.5,328.4 929.5,326.8 933.5,325.2 937.5,323.4 941.5,321.3 945.5,319.2 949.5,317.4 953.5,316.1 957.5,315.0 961.5,313.6 965.5,311.9 969.5,309.9 973.5,307.8 977.5,305.6 981.5,303.3 985.5,301.1 989.5,299.0 993.5,296.9 997.5,294.8 1001.5,292.6 1005.5,290.1 1009.5,287.1 1013.5,283.6 1017.5,279.9 1021.5,276.2 1025.5,272.8 1029.5,269.9 1033.5,267.6 1037.5,265.5 1041.5,263.5 1045.5,261.2 1049.5,258.4 1053.5,255.0 1057.5,251.4 1061.5,248.0 1065.5,245.3 1069.5,242.8 1073.5,240.6 1077.5,238.7 1081.5,236.9 1085.5,235.0 1089.5,233.4 1093.5,232.3 1097.5,232.0 1101.5,232.0 1105.5,232.0 1109.5,232.0 1113.5,232.1 1117.5,232.6 1121.5,233.4 1125.5,234.5 1129.5,235.5 1133.5,236.6 1137.5,237.9 1141.5,239.6 1145.5,242.3 1149.5,245.6 1153.5,248.5 1157.5,250.5 1161.5,252.2 1165.5,253.8 1169.5,255.6 1173.5,257.6 1177.5,259.9 1181.5,262.2 1185.5,264.7 1189.5,267.2 1193.5,269.8 1197.5,272.5 1201.5,275.1 1205.5,277.9 1209.5,280.4 1213.5,282.0 1217.5,283.3 1221.5,284.4 1225.5,285.5 1229.5,286.5 1233.5,287.5 1237.5,288.4 1241.5,289.3 1245.5,290.2 1249.5,291.1 1253.5,292.0 1257.5,293.0 1261.5,294.1 1265.5,295.4 1269.5,296.9 1273.5,298.6 1277.5,300.3 1281.5,302.0 1285.5,303.8 1289.5,305.7 1293.5,307.5 1297.5,309.2 1301.5,310.8 1305.5,312.3 1309.5,313.6" fill="none" stroke="#ffff00" stroke-width="1"/>
<polyline points="5.5,199.2 9.5,197.0 13.5,195.0 17.5,193.5 21.5,192.6 25.5,192.4 29.5,192.4 33.5,192.4 37.5,192.4 41.5,192.4 45.5,191.6 49.5,189.1 53.5,185.8 57.5,182.5 61.5,179.6 65.5,176.5 69.5,173.5 73.5,170.9 77.5,169.0 81.5,167.7 85.5,166.7 89.5,165.7 93.5,164.6 97.5,163.5 101.5,163.1 105.5,163.4 109.5,163.9 113.5,164.3 117.5,164.5 121.5,164.7 125.5,164.8 129.5,164.9 133.5,165.0 137.5,165.2 141.5,165.7 145.5,168.1 149.5,172.2 153.5,179.7 157.5,188.1 161.5,194.5 165.5,200.3 169.5,205.7 173.5,211.1 177.5,216.3 181.5,221.3 185.5,226.3 189.5,231.3 193.5,236.0 197.5,240.7 201.5,245.5 205.5,250.5 209.5,256.2 213.5,261.9 217.5,266.8 221.5,271.2 225.5,275.6 229.5,280.1 233.5,284.4 237.5,288.9 241.5,293.9 245.5,299.9 249.5,306.4 253.5,313.2 257.5,320.4 261.5,328.4 265.5,335.6 269.5,340.8 273.5,345.1 277.5,348.6 281.5,351.4 285.5,353.8 289.5,356.1 293.5,358.7 297.5,361.5 301.5,363.9 305.5,365.4 309.5,365.9 313.5,366.1 317.5,366.2 321.5,366.3 325.5,364.0 329.5,359.6 333.5,355.6 337.5,351.3 341.5,347.3 345.5,344.2 349.5,342.4 353.5,341.1 357.5,339.8 361.5,338.0 365.5,335.4 369.5,332.2 373.5,328.7 377.5,325.3 381.5,321.7 385.5,318.0 389.5,314.1 393.5,309.9 397.5,305.3 401.5,300.7 405.5,296.1 409.5,291.3 413.5,286.9 417.5,284.0 421.5,281.5 425.5,279.5 429.5,278.4 433.5,278.5 437.5,279.0 441.5,279.6 445.5,280.1 449.5,280.2 453.5,279.6 457.5,278.6 461.5,277.3 465.5,276.0 469.5,275.0 473.5,274.1 477.5,273.2 481.5,272.2 485.5,271.0 489.5,269.4 493.5,267.4 497.5,265.3 501.5,263.3 505.5,261.6 509.5,260.5 513.5,259.5 517.5,258.6 521.5,257.9 525.5,257.4 529.5,256.9 533.5,256.6 537.5,256.6 541.5,257.4 545.5,258.6 549.5,260.0 553.5,261.8 557.5,263.6 561.5,265.0 565.5,266.3 569.5,267.6 573.5,269.0 577.5,270.4 581.5,271.9 585.5,273.5 589.5,275.4 593.5,277.6 597.5,280.2 601.5,283.7 605.5,289.8 609.5,296.2 613.5,301.5 617.5,306.5 621.5,311.0 625.5,314.9 629.5,318.4 633.5,321.5 637.5,324.0 641.5,326.4 645.5,328.7 649.5,330.7 653.5,332.2 657.5,333.0 661.5,333.5 665.5,333.8 669.5,333.9 673.5,333.4 677.5,332.3 681.5,331.0 685.5,330.2 689.5,330.8 693.5,332.8 697.5,334.8 701.5,336.1 705.5,336.9 709.5,337.6 713.5,338.3 717.5,339.0 721.5,339.6 725.5,340.2 729.5,340.8 733.5,341.5 737.5,342.3 741.5,343.1 745.5,343.9 749.5,344.9 753.5,346.1 757.5,347.5 761.5,349.3 765.5,352.7 769.5,356.6 773.5,360.1 777.5,363.1 781.5,366.0 785.5,368.5 789.5,371.1 793.5,372.1 797.5,371.2 801.5,369.4 805.5,366.7 809.5,361.6 813.5,358.9 817.5,357.5 821.5,356.4 825.5,355.5 829.5,354.5 833.5,353.5 837.5,352.5 841.5,351.6 845.5,350.7 849.5,349.8 853.5,348.9 857.5,348.1 861.5,347.2 865.5,346.3 869.5,345.3 873.5,344.0 877.5,342.3 881.5,340.4 885.5,338.4 889.5,336.4 893.5,334.5 897.5,332.6 901.5,330.7 905.5,329.2 909.5,328.1 913.5,327.3 917.5,326.4 921.5,325.2 925.5,323.3 929.5,320.8 933.5,318.2 937.5,315.5 941.5,312.6 945.5,309.7 949.5,307.2 953.5,305.3 957.5,303.6 961.5,301.2 965.5,297.0 969.5,293.4 973.5,290.9 977.5,288.8 981.5,286.7 985.5,284.7 989.5,282.9 993.5,281.0 997.5,278.9 1001.5,276.2 1005.5,272.7 1009.5,268.5 1013.5,264.1 1017.5,259.8 1021.5,255.8 1025.5,251.4 1029.5,247.1 1033.5,243.6 1037.5,241.5 1041.5,240.5 1045.5,239.5 1049.5,237.6 1053.5,234.2 1057.5,230.2 1061.5,226.3 1065.5,223.3 1069.5,220.6 1073.5,218.1 1077.5,215.9 1081.5,213.8 1085.5,211.7 1089.5,210.3 1093.5,210.1 1097.5,210.5 1101.5,211.0 1105.5,211.8 1109.5,213.6 1113.5,216.7 1117.5,219.5 1121.5,221.5 1125.5,223.3 1129.5,225.3 1133.5,228.0 1137.5,231.6 1141.5,235.6 1145.5,239.4 1149.5,243.4 1153.5,247.2 1157.5,250.5 1161.5,253.1 1165.5,255.3 1169.5,257.8 1173.5,260.9 1177.5,265.1 1181.5,269.7 1185.5,274.1 1189.5,278.1 1193.5,282.0 1197.5,285.7 1201.5,289.0 1205.5,291.7 1209.5,294.2 1213.5,296.1 1217.5,297.3 1221.5,298.3 1225.5,299.2 1229.5,300.1 1233.5,301.0 1237.5,301.8 1241.5,302.6 1245.5,303.2 1249.5,303.7 1253.5,304.3 1257.5,305.1 1261.5,306.4 1265.5,308.0 1269.5,309.7 1273.5,311.7 1277.5,314.0 1281.5,316.3 1285.5,318.7 1289.5,321.2 1293.5,323.2 1297.5,324.4 1301.5,325.3 1305.5,326.0 1309.5,326.2" fill="none" stroke="#1e90ff" stroke-width="1"/>
<polyline points="5.5,198.1 9.5,195.5 13.5,193.1 17.5,191.2 21.5,189.9 25.5,189.3 29.5,189.1 33.5,188.9 37.5,188.6 41.5,188.0 45.5,185.6 49.5,182.5 53.5,179.7 57.5,176.7 61.5,173.7 65.5,170.5 69.5,166.7 73.5,163.0 77.5,160.1 81.5,158.7 85.5,158.0 89.5,157.5 93.5,157.2 97.5,157.3 101.5,157.7 105.5,158.2 109.5,158.9 113.5,159.5 117.5,160.2 121.5,160.7 125.5,161.1 129.5,161.6 133.5,162.2 137.5,162.9 141.5,164.1 145.5,166.8 149.5,172.3 153.5,183.9 157.5,194.0 161.5,202.8 165.5,210.8 169.5,218.1 173.5,225.2 177.5,232.3 181.5,239.3 185.5,245.8 189.5,251.6 193.5,256.5 197.5,261.2 201.5,265.9 205.5,271.3 209.5,277.5 213.5,283.6 217.5,288.9 221.5,292.6 225.5,296.0 229.5,300.0 233.5,304.6 237.5,309.7 241.5,315.8 245.5,323.3 249.5,331.4 253.5,339.5 257.5,347.7 261.5,355.2 265.5,362.2 269.5,367.3 273.5,370.8 277.5,373.6 281.5,375.8 285.5,377.3 289.5,378.5 293.5,379.7 297.5,381.0 301.5,382.2 305.5,383.0 309.5,383.1 313.5,383.1 317.5,383.1 321.5,380.6 325.5,374.0 329.5,367.7 333.5,361.0 337.5,355.1 341.5,350.3 345.5,346.1 349.5,342.6 353.5,339.8 357.5,337.2 361.5,334.1 365.5,330.2 369.5,326.0 373.5,321.9 377.5,318.4 381.5,315.0 385.5,310.4 389.5,303.3 393.5,295.7 397.5,289.7 401.5,284.6 405.5,280.0 409.5,275.2 413.5,270.4 417.5,267.0 421.5,265.8 425.5,265.1 429.5,264.7 433.5,265.1 437.5,266.6 441.5,268.3 445.5,270.9 449.5,273.1 453.5,273.8 457.5,273.8 461.5,273.8 465.5,273.1 469.5,271.5 473.5,269.6 477.5,267.8 481.5,266.1 485.5,264.3 489.5,262.4 493.5,260.6 497.5,258.7 501.5,256.8 505.5,255.0 509.5,253.6 513.5,252.5 517.5,251.6 521.5,251.0 525.5,250.6 529.5,250.3 533.5,250.1 537.5,250.3 541.5,253.2 545.5,256.6 549.5,259.4 553.5,262.0 557.5,264.4 561.5,266.4 565.5,268.1 569.5,269.7 573.5,271.3 577.5,273.1 581.5,275.1 585.5,277.1 589.5,279.4 593.5,282.0 597.5,285.4 601.5,289.5 605.5,294.9 609.5,303.3 613.5,311.3 617.5,317.1 621.5,322.3 625.5,327.2 629.5,332.7 633.5,337.5 637.5,340.5 641.5,342.0 645.5,343.1 649.5,344.0 653.5,344.6 657.5,345.2 661.5,345.6 665.5,345.7 669.5,344.8 673.5,343.1 677.5,341.0 681.5,336.8 685.5,334.8 689.5,334.8 693.5,335.1 697.5,337.4 701.5,340.3 705.5,342.1 709.5,342.8 713.5,343.3 717.5,343.6 721.5,344.0 725.5,344.5 729.5,345.1 733.5,345.8 737.5,346.5 741.5,347.4 745.5,348.5 749.5,350.0 753.5,352.0 757.5,354.3 761.5,356.9 765.5,360.1 769.5,363.8 773.5,367.6 777.5,371.9 781.5,375.6 785.5,378.5 789.5,380.9 793.5,381.5 797.5,380.3 801.5,377.9 805.5,375.0 809.5,370.3 813.5,364.5 817.5,356.9 821.5,353.3 825.5,352.0 829.5,351.1 833.5,350.5 837.5,349.9 841.5,349.1 845.5,348.1 849.5,346.9 853.5,345.6 857.5,344.2 861.5,342.8 865.5,341.4 869.5,339.8 873.5,338.2 877.5,336.4 881.5,334.6 885.5,332.8 889.5,331.0 893.5,329.2 897.5,327.3 901.5,325.4 905.5,323.8 909.5,322.3 913.5,321.1 917.5,319.8 921.5,318.1 925.5,315.8 929.5,313.0 933.5,309.9 937.5,306.7 941.5,302.8 945.5,299.2 949.5,296.8 953.5,295.1 957.5,293.3 961.5,291.1 965.5,287.7 969.5,283.4 973.5,279.4 977.5,276.6 981.5,274.7 985.5,273.2 989.5,271.7 993.5,269.9 997.5,267.4 1001.5,263.9 1005.5,259.7 1009.5,255.2 1013.5,250.3 1017.5,244.6 1021.5,239.4 1025.5,235.5 1029.5,232.3 1033.5,229.5 1037.5,227.6 1041.5,226.5 1045.5,225.5 1049.5,222.9 1053.5,218.8 1057.5,213.9 1061.5,209.3 1065.5,205.6 1069.5,203.5 1073.5,201.6 1077.5,199.9 1081.5,198.6 1085.5,197.6 1089.5,197.3 1093.5,197.8 1097.5,199.3 1101.5,201.5 1105.5,204.0 1109.5,206.8 1113.5,211.2 1117.5,216.1 1121.5,219.9 1125.5,222.6 1129.5,225.4 1133.5,229.6 1137.5,234.6 1141.5,239.8 1145.5,244.9 1149.5,249.9 1153.5,254.8 1157.5,259.5 1161.5,264.0 1165.5,268.4 1169.5,272.7 1173.5,276.8 1177.5,280.7 1181.5,284.6 1185.5,288.4 1189.5,292.1 1193.5,295.7 1197.5,299.3 1201.5,302.6 1205.5,306.1 1209.5,309.0 1213.5,310.1 1217.5,310.7 1221.5,311.1 1225.5,311.3 1229.5,311.5 1233.5,311.6 1237.5,311.7 1241.5,311.9 1245.5,312.0 1249.5,312.1 1253.5,312.2 1257.5,312.5 1261.5,313.5 1265.5,315.0 1269.5,316.8 1273.5,319.2 1277.5,322.0 1281.5,324.8 1285.5,327.3 1289.5,329.8 1293.5,331.7 1297.5,332.9 1301.5,333.4 1305.5,333.4 1309.5,333.4" fill="none" stroke="#ff0000" stroke-width="1"/>
</g>
<rect x="5" y="293" width="1316" height="1" fill="#ff0000"/>
<rect x="5" y="367" width="1316" height="1" fill="#ff0000"/>
<rect x="1322" y="108" width="2" height="1" fill="#7cfc00"/>
<text x="1327" y="112" fill="#7cfc00" font-family="Liberation Sans, sans-serif" font-size="9.5" letter-spacing="-0.1">150.250</text>
<rect x="1322" y="141" width="2" height="1" fill="#7cfc00"/>
<text x="1327" y="145" fill="#7cfc00" font-family="Liberation Sans, sans-serif" font-size="9.5" letter-spacing="-0.1">149.590</text>
<rect x="1322" y="174" width="2" height="1" fill="#7cfc00"/>
<text x="1327" y="178" fill="#7cfc00" font-family="Liberation Sans, sans-serif" font-size="9.5" letter-spacing="-0.1">148.945</text>
<rect x="1322" y="207" width="2" height="1" fill="#7cfc00"/>
<text x="1327" y="211" fill="#7cfc00" font-family="Liberation Sans, sans-serif" font-size="9.5" letter-spacing="-0.1">148.285</text>
<rect x="1322" y="240" width="2" height="1" fill="#7cfc00"/>
<text x="1327" y="244" fill="#7cfc00" font-family="Liberation Sans, sans-serif" font-size="9.5" letter-spacing="-0.1">147.640</text>
<rect x="1322" y="273" width="2" height="1" fill="#7cfc00"/>
<text x="1327" y="277" fill="#7cfc00" font-family="Liberation Sans, sans-serif" font-size="9.5" letter-spacing="-0.1">146.980</text>
<rect x="1322" y="306" width="2" height="1" fill="#7cfc00"/>
<text x="1327" y="310" fill="#7cfc00" font-family="Liberation Sans, sans-serif" font-size="9.5" letter-spacing="-0.1">146.335</text>
<rect x="1322" y="339" width="2" height="1" fill="#7cfc00"/>
<text x="1327" y="343" fill="#7cfc00" font-family="Liberation Sans, sans-serif" font-size="9.5" letter-spacing="-0.1">145.675</text>
<rect x="1322" y="372" width="2" height="1" fill="#7cfc00"/>
<text x="1327" y="376" fill="#7cfc00" font-family="Liberation Sans, sans-serif" font-size="9.5" letter-spacing="-0.1">145.030</text>
<rect x="1322" y="405" width="2" height="1" fill="#7cfc00"/>
<text x="1327" y="409" fill="#7cfc00" font-family="Liberation Sans, sans-serif" font-size="9.5" letter-spacing="-0.1">144.370</text>
<rect x="1322" y="438" width="2" height="1" fill="#7cfc00"/>
<text x="1327" y="442" fill="#7cfc00" font-family="Liberation Sans, sans-serif" font-size="9.5" letter-spacing="-0.1">143.725</text>
<rect x="1322" y="471" width="2" height="1" fill="#7cfc00"/>
<text x="1327" y="475" fill="#7cfc00" font-family="Liberation Sans, sans-serif" font-size="9.5" letter-spacing="-0.1">143.065</text>
<rect x="1323" y="287" width="41" height="11" fill="#ff0000"/>
<text x="1327" y="296" fill="#400000" font-family="Liberation Sans, sans-serif" font-size="9.5" letter-spacing="-0.1">146.592</text>
<rect x="1323" y="323" width="41" height="11" fill="#7cfc00"/>
<text x="1327" y="332" fill="#000" font-family="Liberation Sans, sans-serif" font-size="9.5" letter-spacing="-0.1">145.898</text>
<rect x="1323" y="361" width="41" height="11" fill="#ff0000"/>
<text x="1327" y="370" fill="#400000" font-family="Liberation Sans, sans-serif" font-size="9.5" letter-spacing="-0.1">145.130</text>
<g>
<line x1="6" y1="514.5" x2="1321" y2="514.5" stroke="#d0d0d0" stroke-width="1" stroke-dasharray="3,3"/>
<line x1="6" y1="625.5" x2="1321" y2="625.5" stroke="#d0d0d0" stroke-width="1" stroke-dasharray="3,3"/>
</g>
<polyline points="5.5,554.1 9.5,563.4 13.5,550.7 17.5,554.1 21.5,554.4 25.5,558.3 29.5,567.6 33.5,582.0 37.5,568.5 41.5,560.0 45.5,546.5 49.5,547.3 53.5,540.5 57.5,543.0 61.5,548.2 65.5,544.3 69.5,541.4 73.5,541.9 77.5,544.3 81.5,555.8 85.5,570.2 89.5,566.0 93.5,560.8 97.5,561.7 101.5,570.2 105.5,563.4 109.5,579.5 113.5,574.4 117.5,574.4 121.5,581.2 125.5,561.7 129.5,571.8 133.5,574.4 137.5,576.9 141.5,577.4 145.5,591.3 149.5,615.0 153.5,620.0 157.5,601.5 161.5,604.0 165.5,608.2 169.5,610.0 173.5,591.3 177.5,594.7 181.5,601.5 185.5,603.2 189.5,596.4 193.5,595.5 197.5,594.7 201.5,602.3 205.5,605.2 209.5,603.2 213.5,604.0 217.5,597.2 221.5,600.6 225.5,604.8 229.5,599.4 233.5,600.6 237.5,604.0 241.5,606.2 245.5,625.2 249.5,596.4 253.5,604.0 257.5,604.5 261.5,608.2 265.5,601.5 269.5,594.7 273.5,584.5 277.5,582.0 281.5,584.2 285.5,586.2 289.5,585.4 293.5,569.3 297.5,576.1 301.5,583.2 305.5,580.3 309.5,579.1 313.5,579.1 317.5,567.6 321.5,549.8 325.5,548.2 329.5,547.3 333.5,540.2 337.5,543.0 341.5,548.2 345.5,546.0 349.5,560.0 353.5,555.4 357.5,554.1 361.5,552.9 365.5,544.8 369.5,548.2 373.5,549.3 377.5,543.0 381.5,537.2 385.5,535.8 389.5,531.2 393.5,529.5 397.5,530.4 401.5,528.4 405.5,525.6 409.5,539.7 413.5,533.8 417.5,544.8 421.5,559.2 425.5,560.0 429.5,557.5 433.5,562.5 437.5,581.2 441.5,584.5 445.5,571.8 449.5,574.0 453.5,570.2 457.5,559.5 461.5,568.0 465.5,565.6 469.5,562.5 473.5,562.5 477.5,557.8 481.5,553.2 485.5,548.7 489.5,555.4 493.5,550.4 497.5,555.8 501.5,553.2 505.5,549.8 509.5,565.1 513.5,562.5 517.5,553.7 521.5,561.7 525.5,563.4 529.5,561.4 533.5,555.8 537.5,583.7 541.5,584.5 545.5,589.6 549.5,593.8 553.5,583.7 557.5,586.2 561.5,583.7 565.5,576.9 569.5,574.4 573.5,584.5 577.5,585.9 581.5,592.2 585.5,593.8 589.5,595.0 593.5,589.6 597.5,596.4 601.5,608.2 605.5,618.4 609.5,621.8 613.5,618.4 617.5,612.5 621.5,615.0 625.5,606.5 629.5,607.4 633.5,596.4 637.5,586.2 641.5,587.9 645.5,585.9 649.5,579.5 653.5,597.2 657.5,562.5 661.5,571.8 665.5,574.4 669.5,567.6 673.5,564.4 677.5,552.0 681.5,558.3 685.5,571.8 689.5,569.3 693.5,578.6 697.5,582.0 701.5,585.9 705.5,573.5 709.5,576.9 713.5,568.5 717.5,574.0 721.5,574.4 725.5,574.4 729.5,578.1 733.5,572.7 737.5,572.4 741.5,574.0 745.5,574.4 749.5,588.8 753.5,583.7 757.5,583.7 761.5,593.8 765.5,598.9 769.5,589.6 773.5,593.8 777.5,604.0 781.5,583.7 785.5,583.2 789.5,583.7 793.5,565.9 797.5,554.1 801.5,562.5 805.5,549.8 809.5,548.7 813.5,548.7 817.5,554.1 821.5,555.4 825.5,571.0 829.5,566.8 833.5,562.5 837.5,562.9 841.5,565.9 845.5,550.7 849.5,559.2 853.5,569.0 857.5,563.9 861.5,567.3 865.5,564.6 869.5,562.5 873.5,560.5 877.5,558.8 881.5,557.5 885.5,560.0 889.5,562.5 893.5,550.7 897.5,545.6 901.5,558.3 905.5,559.5 909.5,558.3 913.5,558.3 917.5,551.5 921.5,554.1 925.5,551.5 929.5,549.3 933.5,546.5 937.5,543.0 941.5,530.0 945.5,528.4 949.5,568.5 953.5,556.6 957.5,551.0 961.5,552.0 965.5,549.8 969.5,542.6 973.5,548.7 977.5,554.1 981.5,565.1 985.5,558.3 989.5,554.4 993.5,552.7 997.5,542.6 1001.5,544.3 1005.5,540.2 1009.5,538.0 1013.5,534.1 1017.5,528.7 1021.5,532.9 1025.5,535.5 1029.5,538.0 1033.5,543.0 1037.5,559.2 1041.5,559.2 1045.5,544.3 1049.5,541.9 1053.5,538.5 1057.5,537.2 1061.5,534.6 1065.5,539.7 1069.5,552.4 1073.5,554.9 1077.5,549.8 1081.5,547.3 1085.5,544.3 1089.5,572.7 1093.5,572.7 1097.5,578.6 1101.5,573.5 1105.5,577.8 1109.5,593.0 1113.5,600.1 1117.5,592.2 1121.5,587.1 1125.5,588.8 1129.5,587.1 1133.5,597.2 1137.5,604.8 1141.5,605.2 1145.5,609.9 1149.5,603.2 1153.5,608.2 1157.5,604.5 1161.5,606.2 1165.5,592.7 1169.5,594.7 1173.5,605.7 1177.5,606.9 1181.5,606.9 1185.5,594.4 1189.5,595.5 1193.5,601.1 1197.5,602.8 1201.5,602.3 1205.5,595.5 1209.5,596.0 1213.5,579.5 1217.5,580.8 1221.5,573.5 1225.5,576.1 1229.5,573.5 1233.5,577.8 1237.5,587.1 1241.5,570.7 1245.5,574.0 1249.5,573.5 1253.5,584.5 1257.5,579.5 1261.5,585.4 1265.5,587.9 1269.5,592.7 1273.5,596.0 1277.5,593.3 1281.5,596.4 1285.5,599.8 1289.5,593.8 1293.5,588.8 1297.5,587.1 1301.5,574.7 1305.5,576.1 1309.5,571.3" fill="none" stroke="#0000ff" stroke-width="1"/>
<text x="1326" y="487" fill="#7cfc00" font-family="Liberation Sans, sans-serif" font-size="9.5" letter-spacing="-0.1">100</text>
<text x="1324" y="518" fill="#7cfc00" font-family="Liberation Sans, sans-serif" font-size="9.5" letter-spacing="-0.1">80</text>
<text x="1324" y="629" fill="#7cfc00" font-family="Liberation Sans, sans-serif" font-size="9.5" letter-spacing="-0.1">20</text>
<text x="1325" y="659" fill="#7cfc00" font-family="Liberation Sans, sans-serif" font-size="9.5" letter-spacing="-0.1">0</text>
<rect x="1322" y="478" width="2" height="1" fill="#7cfc00"/>
<rect x="5" y="663" width="1" height="3" fill="#7cfc00"/>
<text x="5" y="675" fill="#7cfc00" font-family="Liberation Sans, sans-serif" font-size="9.5" letter-spacing="-0.1">15 May 2018</text>
<rect x="69" y="663" width="1" height="3" fill="#7cfc00"/>
<text x="69" y="675" fill="#7cfc00" font-family="Liberation Sans, sans-serif" font-size="9.5" letter-spacing="-0.1">18 May 00:00</text>
<rect x="133" y="663" width="1" height="3" fill="#7cfc00"/>
<text x="133" y="675" fill="#7cfc00" font-family="Liberation Sans, sans-serif" font-size="9.5" letter-spacing="-0.1">22 May 16:00</text>
<rect x="197" y="663" width="1" height="3" fill="#7cfc00"/>
<text x="197" y="675" fill="#7cfc00" font-family="Liberation Sans, sans-serif" font-size="9.5" letter-spacing="-0.1">25 May 08:00</text>
<rect x="261" y="663" width="1" height="3" fill="#7cfc00"/>
<text x="261" y="675" fill="#7cfc00" font-family="Liberation Sans, sans-serif" font-size="9.5" letter-spacing="-0.1">30 May 00:00</text>
<rect x="325" y="663" width="1" height="3" fill="#7cfc00"/>
<text x="325" y="675" fill="#7cfc00" font-family="Liberation Sans, sans-serif" font-size="9.5" letter-spacing="-0.1">1 Jun 16:00</text>
<rect x="389" y="663" width="1" height="3" fill="#7cfc00"/>
<text x="389" y="675" fill="#7cfc00" font-family="Liberation Sans, sans-serif" font-size="9.5" letter-spacing="-0.1">6 Jun 08:00</text>
<rect x="453" y="663" width="1" height="3" fill="#7cfc00"/>
<text x="453" y="675" fill="#7cfc00" font-family="Liberation Sans, sans-serif" font-size="9.5" letter-spacing="-0.1">11 Jun 00:00</text>
<rect x="517" y="663" width="1" height="3" fill="#7cfc00"/>
<text x="517" y="675" fill="#7cfc00" font-family="Liberation Sans, sans-serif" font-size="9.5" letter-spacing="-0.1">13 Jun 16:00</text>
<rect x="581" y="663" width="1" height="3" fill="#7cfc00"/>
<text x="581" y="675" fill="#7cfc00" font-family="Liberation Sans, sans-serif" font-size="9.5" letter-spacing="-0.1">18 Jun 08:00</text>
<rect x="645" y="663" width="1" height="3" fill="#7cfc00"/>
<text x="645" y="675" fill="#7cfc00" font-family="Liberation Sans, sans-serif" font-size="9.5" letter-spacing="-0.1">21 Jun 00:00</text>
<rect x="709" y="663" width="1" height="3" fill="#7cfc00"/>
<text x="709" y="675" fill="#7cfc00" font-family="Liberation Sans, sans-serif" font-size="9.5" letter-spacing="-0.1">25 Jun 16:00</text>
<rect x="773" y="663" width="1" height="3" fill="#7cfc00"/>
<text x="773" y="675" fill="#7cfc00" font-family="Liberation Sans, sans-serif" font-size="9.5" letter-spacing="-0.1">28 Jun 08:00</text>
<rect x="837" y="663" width="1" height="3" fill="#7cfc00"/>
<text x="837" y="675" fill="#7cfc00" font-family="Liberation Sans, sans-serif" font-size="9.5" letter-spacing="-0.1">3 Jul 00:00</text>
<rect x="901" y="663" width="1" height="3" fill="#7cfc00"/>
<text x="901" y="675" fill="#7cfc00" font-family="Liberation Sans, sans-serif" font-size="9.5" letter-spacing="-0.1">5 Jul 16:00</text>
<rect x="965" y="663" width="1" height="3" fill="#7cfc00"/>
<text x="965" y="675" fill="#7cfc00" font-family="Liberation Sans, sans-serif" font-size="9.5" letter-spacing="-0.1">10 Jul 08:00</text>
<rect x="1029" y="663" width="1" height="3" fill="#7cfc00"/>
<text x="1029" y="675" fill="#7cfc00" font-family="Liberation Sans, sans-serif" font-size="9.5" letter-spacing="-0.1">13 Jul 00:00</text>
<rect x="1093" y="663" width="1" height="3" fill="#7cfc00"/>
<text x="1093" y="675" fill="#7cfc00" font-family="Liberation Sans, sans-serif" font-size="9.5" letter-spacing="-0.1">17 Jul 16:00</text>
<rect x="1157" y="663" width="1" height="3" fill="#7cfc00"/>
<text x="1157" y="675" fill="#7cfc00" font-family="Liberation Sans, sans-serif" font-size="9.5" letter-spacing="-0.1">20 Jul 08:00</text>
<rect x="1221" y="663" width="1" height="3" fill="#7cfc00"/>
<text x="1221" y="675" fill="#7cfc00" font-family="Liberation Sans, sans-serif" font-size="9.5" letter-spacing="-0.1">25 Jul 00:00</text>
<rect x="1285" y="663" width="1" height="3" fill="#7cfc00"/>
<text x="1285" y="675" fill="#7cfc00" font-family="Liberation Sans, sans-serif" font-size="9.5" letter-spacing="-0.1">27 Jul 16:00</text>
<path d="M8 108 L15 108 L11.5 112 Z" fill="#7cfc00" shape-rendering="auto"/>
<text x="20" y="113" fill="#7cfc00" font-family="Liberation Sans, sans-serif" font-size="9.5" letter-spacing="-0.1">GBPJPY,H4&#160; 145.766 145.926 145.706 145.898</text>
<text x="9" y="489" fill="#7cfc00" font-family="Liberation Sans, sans-serif" font-size="9.5" letter-spacing="-0.1">RSI(14) 49.6051</text>
</svg>
<!-- tabs -->
<div class="a" style="left:0;top:683px;width:1366px;height:2px;background:#fff"></div>
<div class="a" style="left:0;top:685px;width:1366px;height:1px;background:#000"></div>
<div class="a" style="left:0;top:686px;width:1366px;height:19px;background:#f0f0f0"></div>
<div class="a" style="left:1364px;top:686px;width:2px;height:19px;background:#fff"></div>
<div class="a" style="left:1px;top:686px;width:1px;height:18px;background:#808080"></div>
<div class="a" style="left:434px;top:684px;width:81px;height:21px;background:#fff;border:1px solid #000;border-top:0;border-width:0 2px 2px 1px"></div>
<div id="tabs"></div>
<!-- tab labels -->
<div class="t" style="left:18px;top:688px;color:#5a5a78;font-size:11.5px;letter-spacing:-0.35px">USDJPY,M30</div>
<div class="a" style="left:95px;top:689px;width:1px;height:13px;background:#606060"></div>
<div class="t" style="left:105px;top:688px;color:#5a5a78;font-size:11.5px;letter-spacing:-0.35px">GBPUSD,H4</div>
<div class="a" style="left:178px;top:689px;width:1px;height:13px;background:#606060"></div>
<div class="t" style="left:188px;top:688px;color:#5a5a78;font-size:11.5px;letter-spacing:-0.35px">XAUUSD,H4</div>
<div class="a" style="left:262px;top:689px;width:1px;height:13px;background:#606060"></div>
<div class="t" style="left:273px;top:688px;color:#5a5a78;font-size:11.5px;letter-spacing:-0.35px">EURUSD,H4</div>
<div class="a" style="left:346px;top:689px;width:1px;height:13px;background:#606060"></div>
<div class="t" style="left:358px;top:688px;color:#5a5a78;font-size:11.5px;letter-spacing:-0.35px">USDCAD,H4</div>
<div class="t" style="left:445px;top:688px;color:#000;font-size:11.5px;letter-spacing:-0.35px">GBPJPY,H4</div>
<div class="t" style="left:526px;top:688px;color:#5a5a78;font-size:11.5px;letter-spacing:-0.35px">EURJPY,H4</div>
<div class="a" style="left:594px;top:689px;width:1px;height:13px;background:#606060"></div>
<div class="t" style="left:605px;top:688px;color:#5a5a78;font-size:11.5px;letter-spacing:-0.35px">EURAUD,Daily</div>
<div class="a" style="left:691px;top:689px;width:1px;height:13px;background:#606060"></div>
<div class="t" style="left:702px;top:688px;color:#5a5a78;font-size:11.5px;letter-spacing:-0.35px">EURAUD,Daily</div>
<div class="a" style="left:786px;top:689px;width:1px;height:13px;background:#606060"></div>
<div class="t" style="left:796px;top:688px;color:#5a5a78;font-size:11.5px;letter-spacing:-0.35px">USDCHF,M30</div>
<div class="a" style="left:879px;top:689px;width:1px;height:13px;background:#606060"></div>
<div class="t" style="left:891px;top:688px;color:#5a5a78;font-size:11.5px;letter-spacing:-0.35px">NZDUSD,H4</div>
<div class="a" style="left:966px;top:689px;width:1px;height:13px;background:#606060"></div>
<div class="t" style="left:978px;top:688px;color:#5a5a78;font-size:11.5px;letter-spacing:-0.35px">GBPAUD,Daily</div>
<div class="a" style="left:1061px;top:689px;width:1px;height:13px;background:#606060"></div>
<div class="t" style="left:1075px;top:688px;color:#5a5a78;font-size:11.5px;letter-spacing:-0.35px">AUDJPY,H4</div>
<div class="a" style="left:1146px;top:689px;width:1px;height:13px;background:#606060"></div>
<div class="t" style="left:1157px;top:688px;color:#5a5a78;font-size:11.5px;letter-spacing:-0.35px">EURNZD,Daily</div>
<div class="a" style="left:1242px;top:689px;width:1px;height:13px;background:#606060"></div>
<div class="t" style="left:1254px;top:688px;color:#5a5a78;font-size:11.5px;letter-spacing:-0.35px">AUDUSD,H1</div>
<svg class="a" style="left:1333px;top:690px" width="6" height="9"><path d="M5 0.5 V8.5 L0.8 4.5 Z" fill="#a0a0a0"/></svg>
<svg class="a" style="left:1352px;top:690px" width="6" height="9"><path d="M1 0.5 V8.5 L5.2 4.5 Z" fill="#000"/></svg>

<!-- status bar -->
<div class="a" style="left:0;top:705px;width:1366px;height:23px;background:#f0f0f0;border-top:1px solid #fff"></div>
<div class="t" style="left:2px;top:711px;letter-spacing:-0.44px">For Help, press F1</div>
<!-- status bar fields -->
<div class="a" style="left:672px;top:709px;width:1px;height:18px;background:#a0a0a0"></div>
<div class="a" style="left:788px;top:709px;width:1px;height:18px;background:#a0a0a0"></div>
<div class="a" style="left:890px;top:709px;width:1px;height:18px;background:#a0a0a0"></div>
<div class="a" style="left:961px;top:709px;width:1px;height:18px;background:#a0a0a0"></div>
<div class="a" style="left:1032px;top:709px;width:1px;height:18px;background:#a0a0a0"></div>
<div class="a" style="left:1100px;top:709px;width:1px;height:18px;background:#a0a0a0"></div>
<div class="a" style="left:1170px;top:709px;width:1px;height:18px;background:#a0a0a0"></div>
<div class="a" style="left:1236px;top:709px;width:1px;height:18px;background:#a0a0a0"></div>
<div class="t" style="left:678px;top:711px;letter-spacing:-0.2px">Default</div>
<div class="t" style="left:794px;top:711px;letter-spacing:-0.45px">2018.06.14 04:00</div>
<div class="t" style="left:896px;top:711px;letter-spacing:-0.4px">O: 147.516</div>
<div class="t" style="left:967px;top:711px;letter-spacing:-0.4px">H: 147.635</div>
<div class="t" style="left:1038px;top:711px;letter-spacing:-0.4px">L: 147.422</div>
<div class="t" style="left:1106px;top:711px;letter-spacing:-0.4px">C: 147.573</div>
<div class="t" style="left:1176px;top:711px;letter-spacing:-0.4px">V: 16678</div>
<svg class="a" style="left:1242px;top:711px" width="24" height="13" viewBox="0 0 24 13" shape-rendering="crispEdges"><rect x="0" y="0" width="2" height="9" fill="#4a7000"/><rect x="0" y="10" width="2" height="3" fill="#003050"/><rect x="3" y="0" width="2" height="8" fill="#4a7000"/><rect x="3" y="9" width="2" height="4" fill="#003050"/><rect x="6" y="0" width="2" height="7" fill="#4a7000"/><rect x="6" y="8" width="2" height="5" fill="#003050"/><rect x="9" y="0" width="2" height="6" fill="#4a7000"/><rect x="9" y="7" width="2" height="6" fill="#003050"/><rect x="12" y="0" width="2" height="5" fill="#4a7000"/><rect x="12" y="6" width="2" height="7" fill="#003050"/><rect x="15" y="0" width="2" height="4" fill="#4a7000"/><rect x="15" y="5" width="2" height="8" fill="#003050"/><rect x="18" y="0" width="2" height="3" fill="#4a7000"/><rect x="18" y="4" width="2" height="9" fill="#003050"/><rect x="21" y="0" width="2" height="2" fill="#4a7000"/><rect x="21" y="3" width="2" height="10" fill="#003050"/></svg>
<div class="t" style="left:1269px;top:711px;letter-spacing:-0.3px">1218/1 kb</div>

<!-- taskbar -->
<div class="a" style="left:0;top:728px;width:1366px;height:40px;background:#0c0f11"></div>
<!-- start -->
<svg class="a" style="left:16px;top:740px" width="17" height="17" viewBox="0 0 17 17"><path d="M0 2.3 L7 1.3 V8 H0 Z M8 1.15 L17 0 V8 H8 Z M0 9 H7 V15.7 L0 14.7 Z M8 9 H17 V17 L8 15.85 Z" fill="#fff"/></svg>
<svg class="a" style="left:63px;top:739px" width="18" height="18" viewBox="0 0 18 18"><circle cx="9" cy="9" r="7.2" fill="none" stroke="#fff" stroke-width="1.8"/></svg>
<svg class="a" style="left:111px;top:740px" width="18" height="17" viewBox="0 0 18 17"><path d="M1 1.5 H11 M1 15.5 H11 M1.5 4.5 V12.5 M10.5 4.5 V12.5 M1.5 4.5 H10.5 M1.5 12.5 H10.5 M14.5 0 V6 M14.5 11 V17" fill="none" stroke="#fff" stroke-width="1.3"/><rect x="13" y="7" width="4" height="3" fill="#fff"/></svg>
<!-- explorer -->
<svg class="a" style="left:160px;top:738px" width="22" height="20" viewBox="0 0 22 20"><path d="M1 3 H8 L9.5 1 H21 V18 H1 Z" fill="#f3c74f"/><rect x="1" y="5" width="20" height="13" fill="#fadd7c"/><path d="M6 19.5 V12 H16 V19.5 H13 V15 H9 V19.5 Z" fill="#2b9ee8"/></svg>
<!-- mail -->
<svg class="a" style="left:208px;top:738px" width="24" height="19" viewBox="0 0 24 19"><path d="M0 6 L12 0 L24 6 V19 H0 Z" fill="#fff"/><path d="M0 6 L12 12 L24 6" fill="none" stroke="#0c0f11" stroke-width="1.2"/><path d="M5 7 L15 13 L11 9 Z" fill="#0c0f11"/></svg>
<!-- uc browser -->
<svg class="a" style="left:257px;top:736px" width="24" height="24" viewBox="0 0 24 24"><rect x="0" y="0" width="24" height="24" rx="4" fill="#f47a20"/><path d="M6 16 Q6 9 12 8 Q17 8 18 12 Q19 16 14 18 Q9 19 6 16 Z" fill="none" stroke="#fff" stroke-width="1.5"/><circle cx="10" cy="15" r="2" fill="none" stroke="#fff" stroke-width="1.3"/><path d="M14 6 Q18 4 20 8" fill="none" stroke="#fff" stroke-width="1.3"/></svg>
<!-- opera -->
<svg class="a" style="left:306px;top:736px" width="24" height="24" viewBox="0 0 24 24"><ellipse cx="12" cy="12" rx="11" ry="11.5" fill="#e0141e"/><ellipse cx="12" cy="12" rx="4.5" ry="8.5" fill="#0c0f11"/></svg>
<!-- edge -->
<svg class="a" style="left:357px;top:737px" width="21" height="21" viewBox="0 0 21 21"><path d="M1 11 Q1 1 11 1 Q20 1 20 11 V12.5 H6.5 Q7 17 12 17 Q16 17 19 15 V19 Q16 20.5 11.5 20.5 Q2 20 1.5 11.5 Z M6.5 8.5 H14.5 Q14 5 10.5 5 Q7 5 6.5 8.5 Z" fill="#1a78d8"/></svg>
<!-- chrome -->
<svg class="a" style="left:404px;top:736px" width="24" height="24" viewBox="0 0 24 24"><circle cx="12" cy="12" r="11.5" fill="#db4437"/><path d="M12 12 L1.5 17.5 A11.5 11.5 0 0 1 2 6 Z" fill="#0f9d58"/><path d="M12 12 L2 6 A11.5 11.5 0 0 1 12 0.5 Z" fill="#db4437"/><path d="M12 12 L23 9 A11.5 11.5 0 0 1 12 23.5 L1.5 17.5 Z" fill="#0f9d58"/><path d="M12 12 L23.5 9 A11.5 11.5 0 0 1 13 23.5 Z" fill="#fcc934"/><circle cx="12" cy="12" r="5.5" fill="#fff"/><circle cx="12" cy="12" r="4.2" fill="#4285f4"/></svg>
<!-- green app -->
<svg class="a" style="left:453px;top:736px" width="23" height="24" viewBox="0 0 23 24"><path d="M2 4 H18 L21 6 V19 H13 L10 23 L9 19 H2 Z" fill="#e8901c"/><path d="M4 1 L19 3 L17 17 L3 15 Z" fill="#1e8a3e"/><circle cx="10" cy="8" r="4" fill="none" stroke="#fff" stroke-width="1.3"/><path d="M16 2 L21 1 L20 5" fill="#fff"/></svg>
<!-- skype -->
<svg class="a" style="left:502px;top:736px" width="25" height="25" viewBox="0 0 25 25"><circle cx="11" cy="11" r="10.5" fill="#1ea7e8"/><path d="M15 7.5 Q13 6 11 6 Q7.5 6 7.5 8.5 Q7.5 10.5 11 11 Q14.5 11.5 14.5 13.5 Q14.5 16 11 16 Q8.5 16 7 14.5" fill="none" stroke="#fff" stroke-width="2"/><circle cx="19.5" cy="19.5" r="4.8" fill="#fff" stroke="#6cc04a" stroke-width="1.8"/></svg>
<!-- active w3 -->
<div class="a" style="left:539px;top:729px;width:48px;height:37px;background:#3f4444"></div>
<svg class="a" style="left:551px;top:739px" width="24" height="18" viewBox="0 0 24 18">
<path d="M1.3 1 V11.8 Q1.3 15.6 4.8 15.6 Q8 15.6 8 11.8 V1 M8 11.8 Q8 15.6 11.3 15.6 Q14.8 15.6 14.8 11.8 V8" fill="none" stroke="#68686e" stroke-width="2.4"/>
<path d="M13.2 2.2 H19 Q22 2.2 22 5 Q22 7.9 19 7.9 H16.5 M19 7.9 Q22 7.9 22 11.6 Q22 15.6 18.6 15.6 H15.5" fill="none" stroke="#2fb6ea" stroke-width="2.4"/>
</svg>
<div class="a" style="left:396px;top:766px;width:40px;height:2px;background:#f777ee"></div>
<div class="a" style="left:445px;top:766px;width:40px;height:2px;background:#f777ee"></div>
<div class="a" style="left:494px;top:766px;width:40px;height:2px;background:#f777ee"></div>
<div class="a" style="left:539px;top:766px;width:48px;height:2px;background:#f777ee"></div>
<!-- tray -->
<svg class="a" style="left:1207px;top:743px" width="13" height="8" viewBox="0 0 13 8"><path d="M0.7 7.3 L6.5 1.3 L12.3 7.3" fill="none" stroke="#fff" stroke-width="1.3"/></svg>
<svg class="a" style="left:1231px;top:742px" width="14" height="13" viewBox="0 0 14 13"><path d="M1 12 A11 11 0 0 1 12 1 M4 12 A8 8 0 0 1 12 4 M7 12 A5 5 0 0 1 12 7" fill="none" stroke="#bbb" stroke-width="1.2"/><circle cx="11" cy="11" r="1.7" fill="#fff"/></svg>
<div class="t" style="left:1260px;top:732px;color:#fff;font-size:12px;letter-spacing:-0.2px">9:23 PM</div>
<div class="t" style="left:1256px;top:750px;color:#fff;font-size:12px;letter-spacing:-0.2px">7/30/2018</div>
<svg class="a" style="left:1325px;top:739px" width="26" height="24" viewBox="0 0 26 24"><path d="M0.5 1 H16.5 V13 H5 L1.5 16 V13 H0.5 Z" fill="#fff"/><path d="M3 4 H14 M3 6.5 H14 M3 9 H11" stroke="#0c0f11" stroke-width="1"/><circle cx="16" cy="16" r="7.5" fill="#2a2a2a" stroke="#888" stroke-width="1"/><text x="16" y="20" font-family="Liberation Sans, sans-serif" font-size="11" font-weight="bold" fill="#fff" text-anchor="middle" letter-spacing="-0.5">14</text></svg>
<div class="a" style="left:1362px;top:728px;width:1px;height:40px;background:#505050"></div>

<div class="t" style="left:1074px;top:651px;font-size:19.5px;line-height:22px;color:rgba(128,128,128,0.75);letter-spacing:0.13px">Activate Windows</div>
<div class="t" style="left:1074px;top:676px;font-size:14.5px;line-height:16px;color:rgba(128,128,128,0.55);letter-spacing:0.12px">Go to Settings to activate Windows.</div>

</body></html>
